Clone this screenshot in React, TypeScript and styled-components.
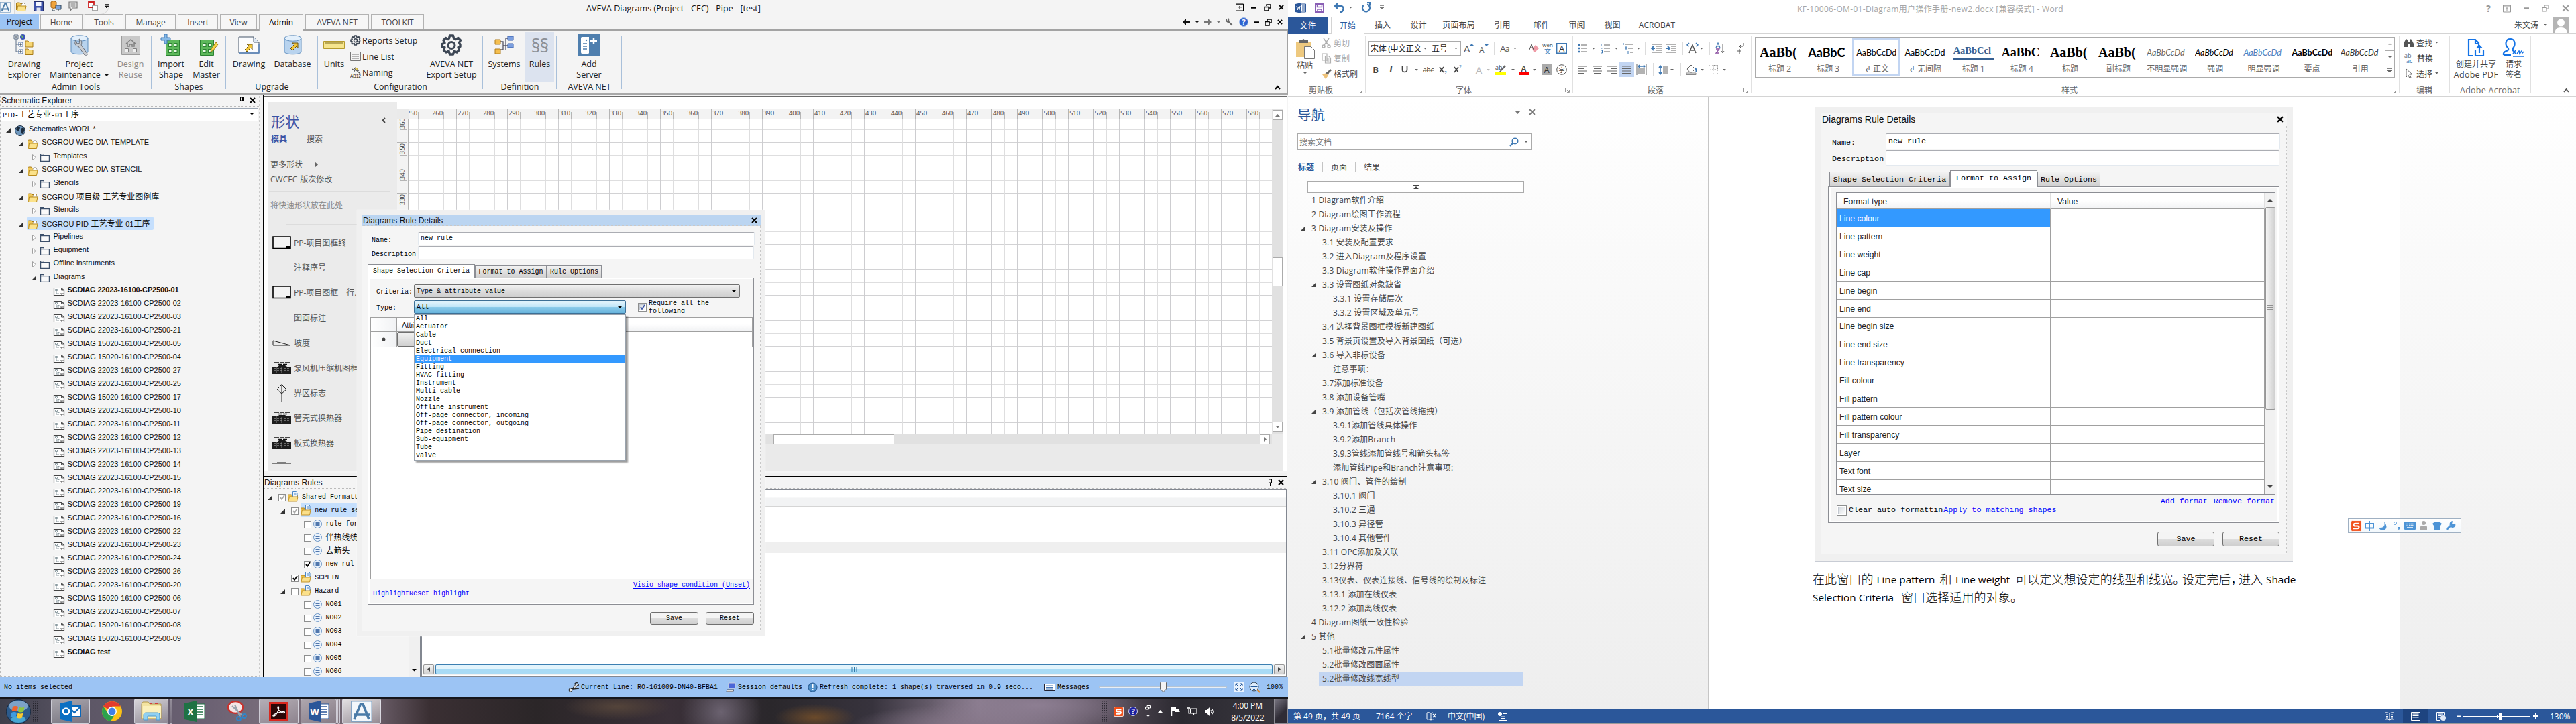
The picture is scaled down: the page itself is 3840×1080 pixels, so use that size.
import React from "react";
import styled, { createGlobalStyle, css } from "styled-components";

const UI = `"Open Sans", "Noto Sans CJK SC", sans-serif`;
const ARIAL = `"Liberation Sans", "Noto Sans CJK SC", sans-serif`;
const MONO = `"Liberation Mono", "Noto Sans CJK SC", monospace`;

const Global = createGlobalStyle`
  * { box-sizing: border-box; }
  html, body { margin: 0; padding: 0; background: #fff; overflow: hidden; }
  body { font-family: ${UI}; font-size: 12px; color: #222; }
  svg { display: block; flex: none; overflow: visible; }
`;

const Desktop = styled.div`
  display: flex; width: 3840px; height: 1080px; overflow: hidden; position: relative;
`;

/* ---------- text helpers ---------- */
const CjkRun = styled.span<{ $s: number }>`font-size: ${p => p.$s}px; letter-spacing: 0;`;
const Mixed = ({ text, cjk = 12 }: { text: string; cjk?: number }) => (
  <>
    {text.split(/([\u3000-\u9fff\uff00-\uffef]+)/).map((s, i) =>
      i % 2 ? <CjkRun key={i} $s={cjk}>{s}</CjkRun> : s
    )}
  </>
);
const Mono = styled.span<{ $s?: number; $c?: string; $u?: boolean }>`
  font-family: ${MONO}; font-size: ${p => p.$s || 10}px; white-space: pre; color: ${p => p.$c || "#000"};
  ${p => p.$u && css`text-decoration: underline; text-underline-offset: 2px;`}
`;

/* ---------- small glyphs ---------- */
const Svg = ({ w = 16, h = w, vb, children }: { w?: number; h?: number; vb?: string; children: React.ReactNode }) => (
  <svg width={w} height={h} viewBox={vb || `0 0 ${w} ${h}`} fill="none">{children}</svg>
);
const Down = ({ c = "#666", w = 6 }: { c?: string; w?: number }) => (
  <Svg w={w} h={w / 2} vb="0 0 6 3"><path d="M0 0h6l-3 3z" fill={c} /></Svg>
);
const Cross = ({ s = 9, c = "#000", t = 2 }) => (
  <Svg w={s} vb="0 0 9 9"><path d="M1 1l7 7M8 1l-7 7" stroke={c} strokeWidth={t} /></Svg>
);
const Pin = () => <Svg w={9} h={11}><path d="M2.5 1h4v5h-4zM5.5 1v5M.5 6.5h8M4.5 6.5V11" stroke="#000" /></Svg>;
const Restore = ({ c = "#000", t = 1.5 }) => (
  <Svg w={11}><path d="M4 3V1h6v5H7.500M1 4.500h6V10H1z" stroke={c} strokeWidth={t} /></Svg>
);
const Minus = ({ c = "#000" }) => <Svg w={8} h={3}><path d="M0 1.500h8" stroke={c} strokeWidth="2.500" /></Svg>;
const BoxUp = ({ c = "#000" }) => (
  <Svg w={12}><path d="M.5 1h11v10H.5zM.5 2h11M6 9V4.500M4 6.500L6 4.500l2 2" stroke={c} /></Svg>
);
const Gear = ({ s = 32 }) => (
  <Svg w={s} vb="0 0 32 32">
    <path d="M13.500 2h5l1 4 3 1.500 3.500-2 3.500 3.500-2 3.500L29 15.500v3l-3 1 1.500 4-3.500 3.500-4-2-1.500 5h-5l-1.500-5-4 2L4.500 24 6 19.500l-4-1v-4l4-1.500-2-4L7.500 5.500 11 7.500l1.500-1.500z" stroke="#3c4654" strokeWidth="3.400" strokeLinejoin="round" />
    <circle cx="16" cy="16.500" r="5" stroke="#3c4654" strokeWidth="3" />
  </Svg>
);
const OpenFolder = ({ s = 16 }) => (
  <Svg w={s} h={s * 14 / 16} vb="0 0 16 14">
    <path d="M.5 12V2l1-1h4l1 1.500h7V6" fill="#eec75a" stroke="#a87b16" />
    <path d="M8 4l3-3 3 3v4H8z" fill="#fff" stroke="#9a9a9a" strokeWidth=".7" />
    <path d="M2.500 6H15l-1.500 7.500H1.500z" fill="#fbe28b" stroke="#b88a1c" />
  </Svg>
);
const DocFolder = () => (
  <Svg w={16}>
    <path d="M.5 14.500V5h5l1 1.500h8V10" fill="#e9bd45" stroke="#b3821a" />
    <path d="M7.500.5h5l1.500 1.500v7h-6.500z" fill="#eef5fd" stroke="#4b86c6" /><path d="M9 3h3.500M9 5h3.500" stroke="#4b86c6" />
    <path d="M2.500 8H15l-1.500 7H.8z" fill="#fbe08a" stroke="#c2932a" />
  </Svg>
);
const BlankFolder = () => <Svg w={14} h={12}><path d="M.6 11.400V.6h4.800v2h8v8.800zM.6 2.600h6" stroke="#3c506b" strokeWidth="1.200" fill="#fafafa" /></Svg>;
const DiagramDoc = () => (
  <Svg w={16} h={12}><path d="M.5.5h11L15.500 4v7.500H.5z" fill="#fff" stroke="#444" strokeWidth="1.200" /><path d="M11.500.5V4h4M9 9h3v2.500M12 9h3" stroke="#555" />
    <path d="M2.500 2.500h3v2h-3zM4 5v4h4M5.500 6.500h3" stroke="#8b9aa0" /></Svg>
);
const Globe = () => (
  <Svg w={16}><circle cx="8" cy="8" r="7.500" fill="#6f97bd" stroke="#223448" /><path d="M3 3c3-2 5-1 5 1L6 8 4 9 2 6zM9 5l4-2 2 4-3 6-2-1-1-4z" fill="#1b2b3c" /></Svg>
);
const Equal = () => (
  <Svg w={13}><circle cx="6.500" cy="6.500" r="6" fill="#e9f2fc" stroke="#6a95c6" /><path d="M3.500 5h6M3.500 8h6" stroke="#1e4f92" strokeWidth="1.500" /></Svg>
);
const TwistOpen = () => <Svg w={7}><path d="M7 0v7H0z" fill="#333" /></Svg>;
const TwistShut = () => <Svg w={6} h={9}><path d="M.5.5L5.300 4.500.5 8.500z" fill="#fff" stroke="#a0a0a0" /></Svg>;

/* ---------- AVEVA shell ---------- */
const Aveva = styled.div`
  width: 1920px; height: 1080px; display: flex; flex-direction: column; background: #f4f4f4; flex: none;
`;
const QuickBar = styled.div`height: 22px; display: flex; align-items: center; flex: none;`;
const QuickPill = styled.div`
  display: flex; align-items: center; width: 142px; height: 22px; margin-left: 5px; padding: 0 0 2px 2px; gap: 10px;
  background: #f0f0f0; border: 1px solid #dadada; border-top: 0; border-radius: 0 0 14px 0;
`;
const AppTitle = styled.div`margin: 2px 0 0 711px; width: 300px; white-space: nowrap; font-size: 12.500px; letter-spacing: 0.050px; color: #111;`;
const WindowKeys = styled.div<{ $gap: number; $r: number }>`
  margin-left: auto; display: flex; align-items: center; gap: ${p => p.$gap}px; padding-right: ${p => p.$r}px;
`;
const TabBar = styled.div`height: 24px; display: flex; border-bottom: 2px solid #a3a3a3; flex: none; align-items: flex-end;`;
const AppTab = styled.div<{ $w: number; $kind?: "file" | "on" }>`
  width: ${p => p.$w}px; height: 23px; margin-right: 3px; font-size: 12px; letter-spacing: -0.1px; color: #444; flex: none;
  display: flex; align-items: center; justify-content: center; border: 1px solid #b2b2b2; border-bottom: 0; background: #f6f6f6;
  ${p => p.$kind === "file" && css`background: #9cc4f4; border: 0; color: #111; margin-right: 2px;`}
  ${p => p.$kind === "on" && css`margin-bottom: -2px; height: 25px; background: #f4f4f4; color: #000; padding-bottom: 2px;`}
`;
const Ribbon = styled.div`height: 95px; display: flex; border-bottom: 2px solid #a8a8a8; border-right: 1px solid #a3a3a3; flex: none;`;
const RibbonGroup = styled.div<{ $w: number }>`
  width: ${p => p.$w}px; display: flex; flex-direction: column; flex: none;
  background: linear-gradient(#a9c0da, #a9c0da) right 7px / 1px 80px no-repeat;
`;
const GroupBody = styled.div`height: 76px; display: flex; padding-top: 2px;`;
const GroupName = styled.div`height: 16px; line-height: 16px; text-align: center; font-size: 12.500px; letter-spacing: 0;`;
const BigButton = styled.div<{ $w: number; $on?: boolean; $dim?: boolean }>`
  width: ${p => p.$w}px; height: 74px; padding-top: 3px; display: flex; flex-direction: column; align-items: center; flex: none;
  line-height: 16px; font-size: 12.500px; text-align: center; white-space: nowrap; letter-spacing: 0;
  background: ${p => (p.$on ? "#dce3ef" : "none")}; color: ${p => (p.$dim ? "#8c8c8c" : "#222")};
`;
const IconBox = styled.div`height: 32px; display: flex; align-items: center; justify-content: center; margin-bottom: 5px;`;
const SmallColumn = styled.div`width: 106px; display: flex; flex-direction: column;`;
const SmallButton = styled.div`height: 24px; display: flex; align-items: center; gap: 2px; font-size: 12.500px; white-space: nowrap;`;
const Inline = styled.span`display: inline-flex; align-items: center; gap: 6px;`;
const CollapseMark = styled.div`margin: auto 10px 5px auto;`;

const Big = ({ w, icon, l1, l2, on, dim, arrow }: any) => (
  <BigButton $w={w} $on={on} $dim={dim}>
    <IconBox>{icon}</IconBox>
    <div>{l1}</div>
    {l2 && <div>{arrow ? <Inline>{l2}<Down c="#111" /></Inline> : l2}</div>}
  </BigButton>
);

const AvevaA = ({ s = 16 }) => (
  <Svg w={s} vb="0 0 32 32"><rect x=".8" y=".8" width="30.400" height="30.400" fill="#f3f7fb" stroke="#7ea1c4" strokeWidth="1.400" />
    <path d="M5 28L14.500 5h3.500l9 23M4 21h24" stroke="#4a7ba8" strokeWidth="3.600" /></Svg>
);
const Floppy = ({ c = "#3c50a8", w = 15 }) => (
  <Svg w={w} vb="0 0 15 15"><path d="M.5.5h14v14h-12l-2-2z" fill={c} stroke="#222c66" /><path d="M3.500 1h8v6h-8z" fill="#f4f6ff" /><path d="M4.500 9.500h6V14h-6z" fill="#dfe3ee" /></Svg>
);
const ShapeCard = ({ plus, gray }: any) => (
  <Svg w={32}>
    <path d={plus ? "M8.500 8.500h20v23h-20z" : "M6.500 8.500h20v23h-20z"} fill={gray ? "#bdbdbd" : "#5db85a"} stroke={gray ? "#8c8c8c" : "#2c8233"} />
    {[0, 1, 2, 3].map(i => (
      <rect key={i} x={(plus ? 12.500 : 10.500) + (i % 2) * 8} y={13.500 + (i > 1 ? 9 : 0)} width="4.500" height="5" fill="#eefbea" stroke="#2c8233" />
    ))}
    {plus ? <path d="M6 0h4v5h5v4h-5v5H6V9H1V5h5z" fill="#86b9e6" stroke="#3f79b6" /> : <path d="M30 12l3 3-7 9-4 2 1-4z" fill="#f7d64a" stroke="#a8801c" />}
  </Svg>
);
const Cylinder = ({ w = 27, children }: any) => (
  <Svg w={w} h={30} vb="0 0 27 30"><path d="M1 5v20c0 5 25 5 25 0V5" fill="#b8d3ee" stroke="#5e8dbd" /><ellipse cx="13.500" cy="5" rx="12.500" ry="4.200" fill="#e3f0fc" stroke="#5e8dbd" />{children}</Svg>
);
const GoldArrow = <path d="M10 20l6-6-3-2h8v8l-2-3-6 6z" fill="#f0c53c" stroke="#6b5410" />;

const AvevaRibbon = () => (
  <Ribbon>
    <RibbonGroup $w={226}>
      <GroupBody>
        <Big w={72} l1="Drawing" l2="Explorer" icon={
          <Svg w={32}>
            <path d="M1 1h6v6H1zM4 7v19h6M4 15h6" stroke="#5c6f86" /><path d="M2.500 4h3" stroke="#234" />
            <circle cx="14" cy="4" r="4" fill="#3b55b8" /><path d="M12 1l3 2-2 3z" fill="#6ec05a" />
            <path d="M8 12h6v6H8zM8 23h6v6H8z" fill="#fff" stroke="#4d6fa3" /><path d="M9 15h4M9 26h4M11 13v4M11 24v4" stroke="#234" />
            <path d="M18 10h4l1 1.500h6v7.500H18zM18 22h4l1 1.500h6v7H18z" fill="#f6d673" stroke="#a87b16" />
          </Svg>} />
        <Big w={92} l1="Project" l2="Maintenance" arrow icon={
          <Cylinder><path d="M8 8c-3 5 0 9 4 9l9 13c2 2 5 0 4-2l-9-13c2-4 0-8-3-9l1 6-4 1z" fill="#c9ccd1" stroke="#6a6f78" /></Cylinder>} />
        <Big w={61} dim l1="Design" l2="Reuse" icon={
          <Svg w={32}><path d="M2.500 2.500h27v28h-27z" fill="#c9c9c9" stroke="#9c9c9c" /><path d="M9 14l7-6 7 6M11 13v5h3v-3h4v3h3v-5" stroke="#808080" strokeWidth="1.500" /><path d="M7.500 21.500h5v5h-5zM19.500 21.500h5v5h-5z" stroke="#808080" fill="#f0f0f0" /></Svg>} />
      </GroupBody>
      <GroupName>Admin Tools</GroupName>
    </RibbonGroup>
    <RibbonGroup $w={111}>
      <GroupBody><Big w={58} l1="Import" l2="Shape" icon={<ShapeCard plus />} /><Big w={47} l1="Edit" l2="Master" icon={<ShapeCard />} /></GroupBody>
      <GroupName>Shapes</GroupName>
    </RibbonGroup>
    <RibbonGroup $w={137}>
      <GroupBody>
        <Big w={68} l1="Drawing" icon={<Svg w={32} h={26}><path d="M1 1h22l8 8v16H1z" fill="#fbfcfe" stroke="#46566b" /><path d="M1 25h30V12" stroke="#5b87bd" strokeWidth="1.500" /><path d="M23 1v8h8" fill="#dce6f2" stroke="#46566b" />{GoldArrow}</Svg>} />
        <Big w={62} l1="Database" icon={<Cylinder>{GoldArrow}</Cylinder>} />
      </GroupBody>
      <GroupName>Upgrade</GroupName>
    </RibbonGroup>
    <RibbonGroup $w={246}>
      <GroupBody>
        <Big w={48} l1="Units" icon={<Svg w={32} h={12}><path d="M.5.5h31v11H.5z" fill="#f6e58d" stroke="#b59b2e" /><path d="M4 1v4M7 1v3M10 1v4M13 1v3M16 1v4M19 1v3M22 1v4M25 1v3M28 1v4" stroke="#7d6a1a" /></Svg>} />
        <SmallColumn>
          <SmallButton><Gear s={16} />Reports Setup</SmallButton>
          <SmallButton><Svg w={16} h={14}><path d="M.5.5h15v13H.5zM3 4h10M3 7h10M3 10h10" stroke="#777" /></Svg>Line List</SmallButton>
          <SmallButton><Svg w={16}><path d="M6 2l9 8M8 0l1 3M12 1l-2 3M3 3l3 2M13 5l-3 1M5 8l2-3" stroke="#555" strokeWidth="1.300" /><path d="M7 3l3-2 1 3" fill="#f5d33d" /><text x="0" y="16" fontSize="6.500" fontFamily="Liberation Sans" fill="#222">AB12</text></Svg>Naming</SmallButton>
        </SmallColumn>
        <Big w={90} l1="AVEVA NET" l2="Export Setup" icon={<Gear />} />
      </GroupBody>
      <GroupName>Configuration</GroupName>
    </RibbonGroup>
    <RibbonGroup $w={110}>
      <GroupBody>
        <Big w={63} l1="Systems" icon={<Svg w={30} h={28}><path d="M9 10h4v12H9M13 16h8M17 5v18M17 5h4" stroke="#556" strokeWidth="1.300" transform="translate(0,-1)" /><path d="M1 6h8v7H1zM1 20h8v7H1z" fill="#f5bf4f" stroke="#b07c1a" /><path d="M20 1h8v6h-8zM20 12h8v6h-8z" fill="#7b9fe0" stroke="#2f56a8" /></Svg>} />
        <Big w={43} on l1="Rules" icon={<Glyph $s={27} $c="#8b8f96">§§</Glyph>} />
      </GroupBody>
      <GroupName>Definition</GroupName>
    </RibbonGroup>
    <RibbonGroup $w={97}>
      <GroupBody>
        <Big w={96} l1="Add" l2="Server" icon={<Svg w={32}><path d="M0 0h32v32H0z" fill="#4f7fae" /><path d="M4 6q0-2 2-2h10v24q0 1-2 1H6q-2 0-2-2z" fill="#fff" /><path d="M7 14h6M7 18h6M7 22h6" stroke="#4f7fae" strokeWidth="1.500" /><circle cx="12" cy="9" r="1.200" fill="#4f7fae" /><path d="M23 5v10M18 10h10" stroke="#fff" strokeWidth="2.500" /></Svg>} />
      </GroupBody>
      <GroupName>AVEVA NET</GroupName>
    </RibbonGroup>
    <CollapseMark><Svg w={9} h={7}><path d="M1 6l3.500-4L8 6" stroke="#000" strokeWidth="2" /></Svg></CollapseMark>
  </Ribbon>
);
const Glyph = styled.span<{ $s: number; $c?: string; $b?: boolean; $i?: boolean; $f?: string }>`
  font-size: ${p => p.$s}px; line-height: 1; color: ${p => p.$c || "#444"}; font-weight: ${p => (p.$b ? 700 : 400)};
  font-style: ${p => (p.$i ? "italic" : "normal")}; font-family: ${p => p.$f || UI}; letter-spacing: -1px;
`;

/* ---------- explorer ---------- */
const Body = styled.div`height: 869px; display: flex; flex: none;`;
const Explorer = styled.div`width: 387px; border-left: 1px dotted #bbb; border-right: 1px dotted #ccc; border-bottom: 1px dotted #bbb; flex: none;`;
const PaneTitle = styled.div<{ $h: number; $r: number }>`
  height: ${p => p.$h}px; display: flex; align-items: center; font-family: ${ARIAL}; font-size: 12.200px; color: #111;
  border-bottom: 1px dotted #bbb; padding: 0 ${p => p.$r}px 0 1px; gap: 7px;
`;
const Grow = styled.span`flex: 1;`;
const Combo = styled.div`
  height: 20px; margin: 2px 1px 2px 0; background: #fff; border: 1px solid #d5dfe9; border-top-color: #9aa5b3; border-radius: 1px;
  display: flex; align-items: center; justify-content: space-between; padding: 0 5px 2px 2px;
`;
const TreeRow = styled.div<{ $d: number }>`height: 20px; display: flex; align-items: center; padding-left: ${p => 2 + p.$d * 19.200}px;`;
const Twist = styled.div`width: 19px; display: flex; justify-content: center; flex: none; padding-top: 3px;`;
const TreeLabel = styled.div<{ $b?: boolean; $on?: boolean }>`
  height: 20px; display: flex; align-items: center; gap: 5px; font-family: ${ARIAL}; font-size: 11px; color: #111; white-space: nowrap;
  ${p => p.$b && css`font-weight: 700; letter-spacing: -0.15px;`}
  ${p => p.$on && css`background: #c5dffd; border-radius: 2px; margin-left: -1px; padding: 0 6px 0 1px;`}
`;
const TreeText = styled.span`padding-bottom: 2px;`;
const TreeIcon = styled.span`padding-top: 3px; display: flex;`;
const treeNodes: [number, string, string, string?][] = [
  [0, "globe", "Schematics WORL *", "open"],
  [1, "yellow", "SCGROU WEC-DIA-TEMPLATE", "open"],
  [2, "blank", "Templates", "shut"],
  [1, "yellow", "SCGROU WEC-DIA-STENCIL", "open"],
  [2, "blank", "Stencils", "shut"],
  [1, "yellow", "SCGROU 项目级-工艺专业图例库", "open"],
  [2, "blank", "Stencils", "shut"],
  [1, "yellow", "SCGROU PID-工艺专业-01工序", "open"],
  [2, "blank", "Pipelines", "shut"],
  [2, "blank", "Equipment", "shut"],
  [2, "blank", "Offline instruments", "shut"],
  [2, "blank", "Diagrams", "open"],
  ...["22023-16100-CP2500-01", "22023-16100-CP2500-02", "22023-16100-CP2500-03", "22023-16100-CP2500-21", "15020-16100-CP2500-05",
    "15020-16100-CP2500-04", "22023-16100-CP2500-27", "22023-16100-CP2500-25", "15020-16100-CP2500-17", "22023-16100-CP2500-10",
    "22023-16100-CP2500-11", "22023-16100-CP2500-12", "22023-16100-CP2500-13", "22023-16100-CP2500-14", "22023-16100-CP2500-15",
    "22023-16100-CP2500-18", "22023-16100-CP2500-19", "22023-16100-CP2500-16", "22023-16100-CP2500-22", "22023-16100-CP2500-23",
    "22023-16100-CP2500-24", "22023-16100-CP2500-26", "22023-16100-CP2500-20", "15020-16100-CP2500-06", "22023-16100-CP2500-07",
    "15020-16100-CP2500-08", "15020-16100-CP2500-09", "test"].map(s => [3, "diag", "SCDIAG " + s] as [number, string, string]),
];
const treeIcons: any = { globe: <Globe />, yellow: <OpenFolder />, blank: <BlankFolder />, diag: <DiagramDoc /> };

const ExplorerPane = () => (
  <Explorer>
    <PaneTitle $h={18} $r={5}>Schematic Explorer<Grow /><Pin /><Cross /></PaneTitle>
    <Combo><Mono $s={10}><Mixed text="PID-工艺专业-01工序" /></Mono><Down c="#000" w={7} /></Combo>
    {treeNodes.map(([d, ic, t, st], i) => (
      <TreeRow key={i} $d={d}>
        <Twist>{st === "open" ? <TwistOpen /> : st === "shut" ? <TwistShut /> : null}</Twist>
        <TreeLabel $b={i === 12 || i === treeNodes.length - 1} $on={i === 7}><TreeIcon>{treeIcons[ic]}</TreeIcon><TreeText><Mixed text={t} /></TreeText></TreeLabel>
      </TreeRow>
    ))}
  </Explorer>
);
const VSplit = styled.div`width: 6px; border-left: 1.500px solid #000; border-right: 1.500px solid #000; background: #f0f0f0; flex: none;`;
const RightSide = styled.div`width: 1526px; display: flex; flex-direction: column; flex: none;`;

/* ---------- Visio drawing ---------- */
const VisioFrame = styled.div`
  height: 560px; margin-top: 2px; background: #fff; border-top: 1px solid #6b6b6b; border-left: 1px solid #8a8a8a; display: flex; padding: 8px 6px 0; flex: none;
`;
const Shapes = styled.div`width: 192px; background: #ebebeb; height: 550px; padding: 0 0 0 4px; overflow: hidden; flex: none; color: #555;`;
const ShapesHead = styled.div`display: flex; justify-content: space-between; padding: 11px 17px 0 0; height: 44px; align-items: center; font-size: 21px; color: #3b53a4;`;
const ShapesTabs = styled.div`display: flex; height: 22px; align-items: center; color: #555; b { color: #3b53a4; }`;
const ThinBar = styled.i<{ $m: number }>`width: 1px; height: 15px; background: #c4c4c4; margin: 0 ${p => p.$m}px;`;
const ShapesLine = styled.div<{ $t: number; $h: number; $c?: string }>`
  display: flex; align-items: center; gap: 18px; height: ${p => p.$h}px; margin-top: ${p => p.$t}px; white-space: nowrap; margin-left: -1px; color: ${p => p.$c || "#555"};
`;
const Rule = styled.div<{ $l: number; $t: number; $b?: number }>`height: 1px; background: #dcdcdc; margin: ${p => p.$t}px 11px ${p => p.$b || 0}px ${p => p.$l}px;`;
const ShapeItem = styled.div`height: 37.400px; display: flex; align-items: center; padding-left: 2px; white-space: nowrap;`;
const ShapeIcon = styled.div`width: 32px; flex: none;`;
const FrameIcon = <Svg w={28} h={20}><path d="M1 1h26v17.500H1z" fill="#f3f3f3" stroke="#000" strokeWidth="1.600" /><path d="M20 15h7v4h-7z" fill="#000" /></Svg>;
const TableIcon = <Svg w={28} h={18}><path d="M3 1h23M8 3.500h14" stroke="#111" strokeWidth="1.300" strokeDasharray="7 1" /><path d="M10 5h9l3 2h6v11H0V7h8z" fill="#1d1d1d" /><path d="M2 10h24M2 13h24" stroke="#ccc" strokeWidth=".9" strokeDasharray="3 2" /><path d="M6 7v10M14 8v9" stroke="#999" strokeWidth=".8" /></Svg>;
const shapeItems: [any, string][] = [
  [FrameIcon, "PP-项目图框终"], [null, "注释序号"], [FrameIcon, "PP-项目图框一行."], [null, "图面标注"],
  [<Svg w={28} h={9}><path d="M1 8V1l26 7z" stroke="#222" /></Svg>, "坡度"],
  [TableIcon, "泵风机压缩机图框"],
  [<Svg w={28} h={26}><path d="M14 0v26M14 1l7 7-7 6-7-6z" stroke="#222" /></Svg>, "界区标志"],
  [TableIcon, "管壳式换热器"], [TableIcon, "板式换热器"],
];
const Drawing = styled.div`width: 1320px; margin-top: 10px; height: 540px; background: #eaeaea; display: flex; flex-direction: column; flex: none;`;
const DrawingTop = styled.div`display: flex; height: 485px;`;
const Sheet = styled.div`width: 1304px; display: flex; flex-direction: column;`;
const HRuler = styled.div`height: 16px; margin-left: 17px; display: flex; overflow: hidden; background: #f3f3f3; border-bottom: 1px solid #b5b5b5;`;
const HCell = styled.div`
  width: 38px; flex: none; border-left: 1px solid #b5b5b5; font-size: 9.500px; line-height: 14px; padding-left: 1px; color: #444; letter-spacing: -0.1px;
  background: linear-gradient(#b5b5b5, #b5b5b5) 18px 5px / 1px 11px no-repeat;
  &:first-child { margin-left: -5px; }
`;
const SheetRow = styled.div`display: flex; height: 469px;`;
const VRuler = styled.div`width: 17px; background: #f3f3f3; border-right: 1px solid #b5b5b5; overflow: hidden;`;
const VCell = styled.div`
  height: 38px; border-top: 1px solid #b5b5b5; font-size: 9.500px; color: #444; writing-mode: vertical-rl; line-height: 15px;
  background: linear-gradient(#b5b5b5, #b5b5b5) 5px 18px / 12px 1px no-repeat;
  span { transform: rotate(180deg); display: inline-block; padding-bottom: 1px; }
  &:first-child { margin-top: -4px; }
`;
const GridArea = styled.div`
  width: 1287px; background-color: #fff;
  background-image: linear-gradient(90deg, #cdcdd0 1px, transparent 1px), linear-gradient(90deg, #dededf 1px, transparent 1px),
    linear-gradient(#d2d2d4 1px, transparent 1px), linear-gradient(#dededf 1px, transparent 1px);
  background-size: 38px 38px; background-position: 33px 0, 14px 0, 0 34px, 0 15px;
`;
const VScroll = styled.div`width: 16px; background: #e1e1e1; display: flex; flex-direction: column; align-items: center; padding: 2px 0;`;
const FlatBox = styled.div<{ $w: number; $h: number; $mt?: number; $ml?: number }>`
  width: ${p => p.$w}px; height: ${p => p.$h}px; margin-top: ${p => p.$mt || 0}px; margin-left: ${p => p.$ml || 0}px;
  border: 1px solid #ababab; background: #fff; display: flex; align-items: center; justify-content: center; flex: none;
`;
const HScroll = styled.div`height: 16px; width: 1304px; background: #e1e1e1; display: flex; align-items: center;`;

const DrawingPane = () => (
  <VisioFrame>
    <Shapes>
      <ShapesHead><span>形状</span><Svg w={6} h={9}><path d="M5 1L1.500 4.500 5 8" stroke="#444" strokeWidth="1.800" /></Svg></ShapesHead>
      <ShapesTabs><b>模具</b><ThinBar $m={14} />搜索</ShapesTabs>
      <ShapesLine $t={15} $h={24}>更多形状<Svg w={5} h={9}><path d="M0 0l5 4.500L0 9z" fill="#666" /></Svg></ShapesLine>
      <ShapesLine $t={-1} $h={22}>CWCEC-版次修改</ShapesLine>
      <Rule $l={-3} $t={7} />
      <ShapesLine $t={10} $h={20} $c="#888">将快速形状放在此处</ShapesLine>
      <Rule $l={23} $t={18} $b={8} />
      {shapeItems.map(([ic, t], i) => <ShapeItem key={i}><ShapeIcon>{ic}</ShapeIcon>{t}</ShapeItem>)}
      <ShapeItem><ShapeIcon>{<Svg w={28} h={20}><path d="M0 3h28M7 2h14" stroke="#111" /></Svg>}</ShapeIcon></ShapeItem>
    </Shapes>
    <Drawing>
      <DrawingTop>
        <Sheet>
          <HRuler>{Array.from({ length: 34 }, (_, i) => <HCell key={i}>{250 + i * 10}</HCell>)}</HRuler>
          <SheetRow>
            <VRuler>{Array.from({ length: 12 }, (_, i) => <VCell key={i}><span>{360 - i * 10}</span></VCell>)}</VRuler>
            <GridArea />
          </SheetRow>
        </Sheet>
        <VScroll>
          <FlatBox $w={15} $h={15}><Svg w={7} h={4}><path d="M0 4h7L3.500 0z" fill="#777" /></Svg></FlatBox>
          <FlatBox $w={15} $h={43} $mt={205} />
          <FlatBox $w={15} $h={15} $mt={202}><Down c="#777" w={7} /></FlatBox>
        </VScroll>
      </DrawingTop>
      <HScroll><FlatBox $w={180} $h={15} $ml={561} /><FlatBox $w={15} $h={15} $ml={545}><Svg w={4} h={7}><path d="M0 0l4 3.500L0 7z" fill="#777" /></Svg></FlatBox></HScroll>
    </Drawing>
  </VisioFrame>
);

/* ---------- rules pane ---------- */
const HSplit = styled.div`height: 6px; border-top: 1.500px solid #000; border-bottom: 1.500px solid #000; background: #f0f0f0; margin-top: 2px; flex: none;`;
const RulesBody = styled.div`display: flex; height: 281px;`;
const RulesTree = styled.div`width: 216px; height: 281px; overflow: hidden; padding-top: 2px;`;
const CheckBox = styled.span`
  width: 11px; height: 11px; border: 1px solid #8e8f8f; background: #fff; display: flex; align-items: center; justify-content: center; flex: none; margin: 2px 3px 0 3px;
`;
const Tick = ({ c }: { c: string }) => <Svg w={8} h={8}><path d="M1 4l2 3 4-6" stroke={c} strokeWidth="1.800" /></Svg>;
const RuleRow = styled.div<{ $d: number }>`height: 20px; display: flex; align-items: center; padding-left: ${p => p.$d * 19.200}px;`;
const RuleLabel = styled.div<{ $on?: boolean }>`height: 20px; flex: 1; display: flex; align-items: center; gap: 5px; background: ${p => (p.$on ? "#c5dffd" : "none")}; overflow: hidden;`;
const RulesScroll = styled.div`width: 17px; background: #f0f0f0; display: flex; flex-direction: column; justify-content: flex-end; align-items: center; padding-bottom: 9px;`;
const RulesList = styled.div`
  width: 1292px; margin-top: 1px; border: 1px solid #828790; height: 280px; background: #fff; display: flex; flex-direction: column; border-left: 3px double #828790;
`;
const ListHead = styled.div`height: 25px; background: linear-gradient(#fff 45%, #f2f3f4 50%); border-bottom: 1px solid #d5d5d5;`;
const ListStripe = styled.div`height: 17px; margin-top: 52px; background: #efefef;`;
const AeroScroll = styled.div`height: 17px; margin: auto 2px 2px 2px; background: #f0f0f0; display: flex; gap: 2px; align-items: center;`;
const AeroBtn = styled.div`width: 16px; height: 15px; border: 1px solid #979797; border-radius: 2px; background: linear-gradient(#f5f5f5, #d0d0d0); display: flex; align-items: center; justify-content: center; flex: none;`;
const AeroThumb = styled.div`
  flex: 1; height: 15px; border: 1px solid #3c7fb1; border-radius: 2px; background: linear-gradient(#e3f4fc 0 45%, #a9dbf5 50% 100%);
  display: flex; align-items: center; justify-content: center;
`;
const rules: [number, boolean, string, string, string][] = [
  [0, true, "dim", "folder", "Shared Formatt"], [1, true, "dim", "folder", "new rule se"], [2, false, "", "eq", "rule for"], [2, false, "", "eq", "伴热线统"],
  [2, false, "", "eq", "去箭头"], [2, false, "on", "eq", "new rul"], [1, false, "on", "folder", "SCPLIN"], [1, true, "", "folder", "Hazard"],
  ...["NO01", "NO02", "NO03", "NO04", "NO05", "NO06"].map(s => [2, false, "", "eq", s] as [number, boolean, string, string, string]),
];
const RulesPane = () => (
  <>
    <PaneTitle $h={18} $r={5}>Diagrams Rules<Grow /><Pin /><Cross /></PaneTitle>
    <RulesBody>
      <RulesTree>
        {rules.map(([d, open, ck, ic, t], i) => (
          <RuleRow key={i} $d={d}>
            <Twist>{open && <TwistOpen />}</Twist>
            <CheckBox>{ck && <Tick c={ck === "on" ? "#000" : "#aaa"} />}</CheckBox>
            <RuleLabel $on={i === 1}>{ic === "eq" ? <Equal /> : <DocFolder />}<Mono><Mixed text={t} /></Mono></RuleLabel>
          </RuleRow>
        ))}
      </RulesTree>
      <RulesScroll><Down c="#000" w={7} /></RulesScroll>
      <RulesList>
        <ListHead /><ListStripe />
        <AeroScroll>
          <AeroBtn><Svg w={4} h={7}><path d="M4 0L0 3.500 4 7z" fill="#444" /></Svg></AeroBtn>
          <AeroThumb><Svg w={9} h={7}><path d="M1 0v7M4.500 0v7M8 0v7" stroke="#2d78a8" /></Svg></AeroThumb>
          <AeroBtn><Svg w={4} h={7}><path d="M0 0l4 3.500L0 7z" fill="#444" /></Svg></AeroBtn>
        </AeroScroll>
      </RulesList>
    </RulesBody>
  </>
);

/* ---------- status and taskbar ---------- */
const StatusBar = styled.div`height: 30px; background: #9cc4f4; display: flex; align-items: center; padding-left: 6px; flex: none;`;
const StatusItem = styled.div<{ $w: number; $ml: number }>`width: ${p => p.$w}px; margin-left: ${p => p.$ml}px; display: flex; align-items: center; gap: 3px; flex: none; white-space: nowrap;`;
const SliderLine = styled.div`width: 190px; height: 3px; margin-left: 15px; background: #e8eef5; border: 1px solid #b5c4d4; display: flex; align-items: center; padding-left: 89px;`;
const SliderThumb = <Svg w={10} h={16}><path d="M.5 1.500l1-1h7l1 1V11L5 15.500.5 11z" fill="#f3f3f3" stroke="#666" /></Svg>;
const Taskbar = styled.div`
  height: 40px; display: flex; align-items: center; border-top: 2px solid #15161c; flex: none;
  background:
    radial-gradient(ellipse 160px 40px at 1545px 10px, #8d7e92 0, transparent 100%),
    radial-gradient(ellipse 180px 30px at 1450px 38px, #857688 0, transparent 100%),
    radial-gradient(ellipse 60px 20px at 1215px 28px, #6b4a2a 0, transparent 100%),
    radial-gradient(ellipse 80px 20px at 920px 12px, #54443a 0, transparent 100%),
    radial-gradient(ellipse 60px 60px at 1075px 20px, #6b6270 0, transparent 100%),
    linear-gradient(90deg, #3e3f4b 0, #5c5665 120px, #6a6072 300px, #7b6f7c 420px, #6c5f6a 560px, #3a2f33 640px, #2b2628 800px, #3a3038 1000px, #2a272b 1150px, #37333d 1300px, #8a7c8e 1460px, #5b515e 1640px, #2b2930 1760px, #3a3840 1920px);
`;
const TaskSlot = styled.div<{ $w: number; $ml?: number; $box?: number }>`
  width: ${p => p.$w}px; height: 38px; margin-left: ${p => p.$ml || 0}px; display: flex; align-items: center; justify-content: center; flex: none;
  ${p => p.$box && css`border: 1px solid rgba(225,225,235,.75); border-radius: 3px;
    background: linear-gradient(160deg, rgba(255,255,255,${p.$box}) , rgba(255,255,255,${p.$box * 0.35}));`}
`;
const Grip = () => <Svg w={9} h={32}>{[0, 3, 6].map(x => <path key={x} d={`M${x + 1} 0v32`} stroke="#1a1a20" strokeWidth="1.500" strokeDasharray="1.500 2" />)}</Svg>;
const Office = ({ c, l }: { c: string; l: string }) => (
  <Svg w={32}><path d="M15 5h16v22H15z" fill="#fff" stroke={c} /><path d="M18 9h10M18 13h10M18 17h10M18 21h10" stroke={c} strokeWidth="1.600" />
    <path d="M1 4l18-4v32L1 28z" fill={c} /><text x="10" y="21.500" textAnchor="middle" fontSize="14" fontWeight="700" fontFamily="Open Sans" fill="#fff">{l}</text></Svg>
);
const Clock = styled.div`width: 68px; margin-left: 10px; margin-top: 1px; color: #fff; font-size: 12px; line-height: 18px; text-align: center; letter-spacing: -0.1px;`;
const ShowDesktop = styled.div`width: 22px; height: 38px; margin-left: 6px; border: 1px solid #8d8b93; background: linear-gradient(135deg, #777480, #2f2c36 60%);`;
const SogouS = ({ s = 15 }) => (
  <Svg w={s} vb="0 0 15 15"><rect x=".5" y=".5" width="14" height="14" rx="1.500" fill="#f1511b" stroke="#fff" strokeWidth=".8" /><path d="M11.500 4.300H6Q3.800 4.500 4 6t2 1.500h3q2.200.2 2 1.700T9 10.800H3.500" stroke="#fff" strokeWidth="1.900" /></Svg>
);

const AvevaStatus = () => (
  <StatusBar>
    <StatusItem $w={120} $ml={0}><Mono>No items selected</Mono></StatusItem>
    <StatusItem $w={224} $ml={721}><Svg w={16}><path d="M2 14a3 3 0 015-3l5-6h4M7 11l9-1M9 4l3-3 2 1" stroke="#222" strokeWidth="1.300" /><circle cx="3.500" cy="12.500" r="2.500" fill="#eee" stroke="#222" /><path d="M7 9l5-6 3 1-6 7z" fill="#ddd" stroke="#333" /></Svg><Mono>Current Line: RO-161009-DN40-BFBA1</Mono></StatusItem>
    <StatusItem $w={115} $ml={12}><Svg w={14} h={15}><path d="M3 1h10v8H3z" fill="#4a66d8" stroke="#ccd" /><path d="M1 11h10l-1.500 3H0z" fill="#ddd" stroke="#445" /></Svg><Mono>Session defaults</Mono></StatusItem>
    <StatusItem $w={340} $ml={6}><Svg w={15}><circle cx="7.500" cy="7.500" r="6.500" fill="#4f8fc9" stroke="#2b5f96" strokeWidth="1.200" /><path d="M7.500 3v5.500M7.500 10v2" stroke="#fff" strokeWidth="2" /></Svg><Mono>Refresh complete: 1 shape(s) traversed in 0.9 seco...</Mono></StatusItem>
    <StatusItem $w={67} $ml={13}><Svg w={16} h={11}><path d="M.5.500h15v10H.5z" fill="#fff" stroke="#223" /><path d="M3 3h10M3 5.500h10M3 8h10" stroke="#4474b0" /></Svg><Mono>Messages</Mono></StatusItem>
    <SliderLine>{SliderThumb}</SliderLine>
    <StatusItem $w={16} $ml={10}><Svg w={16}><rect x=".5" y=".5" width="15" height="15" fill="#eaf3fd" stroke="#335" /><path d="M3 3l3 3M13 3l-3 3M3 13l3-3M13 13l-3-3M3 6V3h3M10 3h3v3M3 10v3h3M10 13h3v-3" stroke="#24599c" /></Svg></StatusItem>
    <StatusItem $w={16} $ml={7}><Svg w={16}><circle cx="7.500" cy="7.500" r="6.500" fill="#dcebfb" stroke="#345" /><path d="M7.500 2.500v10M2.500 7.500h10M6 4l1.500-1.500L9 4M6 11l1.500 1.500L9 11" stroke="#24599c" /><path d="M12 12l4 4" stroke="#e08a2c" strokeWidth="2" /></Svg></StatusItem>
    <StatusItem $w={26} $ml={10}><Mono>100%</Mono></StatusItem>
  </StatusBar>
);
const TaskbarView = () => (
  <Taskbar>
    <TaskSlot $w={38} $ml={8}>
      <Svg w={37}><circle cx="18.500" cy="18.500" r="18" fill="#2c5b8c" stroke="#16293f" /><ellipse cx="18.500" cy="10" rx="14" ry="8" fill="#a8cbe8" opacity=".65" /><ellipse cx="18.500" cy="30" rx="11" ry="5" fill="#52c6ef" opacity=".7" />
        <path d="M10 11q4-2 8 0l-1.500 7q-4-2-8 0z" fill="#f0642c" /><path d="M19.500 11.500q4 2 8 0l-1.500 7q-4 2-8 0z" fill="#8ec63f" /><path d="M8 20q4-2 8 0l-1.500 7q-4-2-8 0z" fill="#3f9be0" /><path d="M17.500 20.500q4 2 8 0l-1.500 7q-4 2-8 0z" fill="#fbc92f" /></Svg>
    </TaskSlot>
    <TaskSlot $w={9} $ml={3}><Grip /></TaskSlot>
    <TaskSlot $w={58} $ml={18} $box={0.5}><Svg w={32}><path d="M14 8h17v16H14z" fill="#fff" stroke="#0a66b8" strokeWidth="2" /><path d="M18 14l4 4 8-8" stroke="#0a66b8" strokeWidth="2" /><path d="M1 4l18-4v32L1 28z" fill="#0a6fc2" /><circle cx="9.500" cy="16" r="4.500" stroke="#fff" strokeWidth="2.600" /></Svg></TaskSlot>
    <TaskSlot $w={66}><Svg w={30}><circle cx="15" cy="15" r="15" fill="#fbc116" /><path d="M15 15L2 7.500A15 15 0 0128 7.500H15z" fill="#e33b2e" /><path d="M2 7.500A15 15 0 0013 29.900L20 18 15 21 9 18z" fill="#2ba24c" /><circle cx="15" cy="15" r="7" fill="#fff" /><circle cx="15" cy="15" r="5.500" fill="#3f7fe8" /></Svg></TaskSlot>
    <TaskSlot $w={51} $box={0.75}><Svg w={32}><path d="M1 5l2-3h8l2 3h17v22H1z" fill="#f3e3a0" stroke="#b59a4a" /><path d="M3 8h27v18H3z" fill="#fbf0bb" /><path d="M13 4h4M21 4h5" stroke="#d33b3b" strokeWidth="2" /><path d="M4 29v-8q0-3 3-3h18q3 0 3 3v8h-5v-6H10v6z" fill="#8fd0f2" stroke="#4c9acb" /></Svg></TaskSlot>
    <TaskSlot $w={4} $ml={2} $box={0.3} />
    <TaskSlot $w={66}><Office c="#1f7244" l="X" /></TaskSlot>
    <TaskSlot $w={62}><Svg w={32}><ellipse cx="13" cy="10" rx="11" ry="9" fill="#f4e6e6" stroke="#c8332e" strokeWidth="2.500" /><path d="M8 8l16 15M12 6l8 18" stroke="#9aa3ad" strokeWidth="2.200" /><circle cx="18" cy="27" r="3" stroke="#2f86c9" strokeWidth="2" /><circle cx="26" cy="23" r="3" stroke="#2f86c9" strokeWidth="2" /></Svg></TaskSlot>
    <TaskSlot $w={59} $ml={1} $box={0.45}><Svg w={29} h={28}><path d="M1.500 1.500h26v25h-26z" fill="#2a0707" stroke="#d8281f" strokeWidth="3" /><path d="M7 21c3 0 8-8 7.500-13-.3-2-2-1.500-1.500.8 1 4 5 7.500 9 7.700 2 0 2-2 0-2-5 0-12 2.500-15 4.500-1.500 1-1.500 2 0 2z" stroke="#fff" strokeWidth="1.300" /></Svg></TaskSlot>
    <TaskSlot $w={54} $ml={3} $box={0.4}><Office c="#2a5699" l="W" /></TaskSlot>
    <TaskSlot $w={4} $ml={1} $box={0.3} />
    <TaskSlot $w={58} $ml={3} $box={0.8}><AvevaA s={32} /></TaskSlot>
    <TaskSlot $w={9} $ml={1074}><Grip /></TaskSlot>
    <TaskSlot $w={20} $ml={6}><SogouS /></TaskSlot>
    <TaskSlot $w={24}><Svg w={14}><circle cx="7" cy="7" r="6.500" fill="#1a1fa0" stroke="#cfd3e8" /><text x="7" y="11" textAnchor="middle" fontSize="11" fontWeight="700" fontFamily="Open Sans" fill="#fff">?</text></Svg></TaskSlot>
    <TaskSlot $w={20}><Svg w={9} h={18}><path d="M3 3V.5h5.500V4H6M.5 3h5v3h-5z" stroke="#fff" /><path d="M1 14h7l-3.500 3z" fill="#fff" /></Svg></TaskSlot>
    <TaskSlot $w={16}><Svg w={7} h={4}><path d="M0 4h7L3.500 0z" fill="#fff" /></Svg></TaskSlot>
    <TaskSlot $w={30}><Svg w={15} h={14}><path d="M1.500 0v14" stroke="#fff" strokeWidth="1.500" /><path d="M2 1h6v2h6l-2 2.500 2 2.500H7V7H2z" fill="#fff" /></Svg></TaskSlot>
    <TaskSlot $w={20}><Svg w={15} h={14}><path d="M4.500 3h9.500v7H4.500zM7 12.500h6M9.500 10v2M0 2h4M1 0v4M3 0v4M2 4v6h2" stroke="#fff" strokeWidth="1.200" /></Svg></TaskSlot>
    <TaskSlot $w={30}><Svg w={13} h={13}><path d="M0 4h3l4-4v13L3 9H0z" fill="#fff" /><path d="M9 4q2 2.500 0 5M11 2.500q3 4 0 8" stroke="#fff" /></Svg></TaskSlot>
    <Clock>4:00 PM<br />8/5/2022</Clock>
    <ShowDesktop />
  </Taskbar>
);

/* ---------- rule details dialogs ---------- */
const DialogShell = styled.div<{ $w: number; $h: number; $p: number }>`
  width: ${p => p.$w}px; height: ${p => p.$h}px; padding: ${p => p.$p}px; background: #f0f0f0; font-family: ${MONO};
`;
const FloatingDialog = styled(DialogShell)`position: absolute; left: 532px; top: 313px; border-top: 1px solid #f8f8f8; box-shadow: 0 0 1px #fff;`;
const DialogInner = styled.div<{ $h: number }>`height: ${p => p.$h}px; background: #f5f5f5; border: 1px dotted #c8c8c8; border-top: 0; display: flex; flex-direction: column;`;
const DialogTitle = styled.div<{ $h: number; $s: number; $bg: string }>`
  height: ${p => p.$h}px; margin: 0 -1px; background: ${p => p.$bg}; display: flex; align-items: center; justify-content: space-between; padding: 0 5px 0 2px;
  font-family: ${ARIAL}; font-size: ${p => p.$s}px; color: #111; border-bottom: 1px dotted #c8c8c8; flex: none;
`;
const Field = styled.div<{ $h: number; $mt: number; $lw: number; $pl: number; $w: number }>`
  display: flex; height: ${p => p.$h}px; margin-top: ${p => p.$mt}px; padding-left: ${p => p.$pl}px; align-items: center; flex: none;
  > span { width: ${p => p.$lw}px; padding-top: 3px; flex: none; }
  > div { width: ${p => p.$w}px; height: 100%; background: #fff; border: 1px solid #e3e9ef; border-top-color: #abadb3; border-radius: 2px; padding: 0 3px 1px; display: flex; align-items: center; }
`;
const TabStrip = styled.div<{ $ml: number; $mt: number; $h: number }>`display: flex; align-items: flex-end; height: ${p => p.$h}px; margin: ${p => p.$mt}px 0 0 ${p => p.$ml}px; flex: none;`;
const DlgTab = styled.div<{ $w: number; $h: number; $on?: boolean }>`
  width: ${p => p.$w}px; height: ${p => p.$h}px; border: 1px solid #8c8e94; border-bottom: 0; display: flex; align-items: center; justify-content: center;
  background: ${p => (p.$on ? "#fff" : "linear-gradient(#f2f2f2, #cfcfcf)")}; flex: none; position: relative; z-index: ${p => (p.$on ? 1 : 0)};
  ${p => p.$on && css`margin-bottom: -1px; padding-bottom: 2px;`}
`;
const TabPage = styled.div<{ $w: number; $h: number; $ml: number; $p: string }>`
  width: ${p => p.$w}px; height: ${p => p.$h}px; margin-left: ${p => p.$ml}px; border: 1px solid #8c8e94; background: #fff; padding: ${p => p.$p}; flex: none;
`;
const PageInner = styled.div<{ $p?: string }>`height: 100%; padding: ${p => p.$p || 0}; background: #f5f5f5; display: flex; flex-direction: column; position: relative;`;
const CriteriaRow = styled.div<{ $mt: number }>`
  display: flex; height: 20px; margin-top: ${p => p.$mt}px; align-items: center; padding-left: 9px; flex: none;
  > span:first-child { width: 56px; padding-top: 2px; }
`;
const Select = styled.div<{ $w: number; $hot?: boolean }>`
  width: ${p => p.$w}px; height: 20px; display: flex; align-items: center; justify-content: space-between; padding: 0 4px 0 3px; border-radius: 2px; flex: none;
  border: 1px solid ${p => (p.$hot ? "#3c6f95" : "#707070")};
  background: ${p => (p.$hot ? "linear-gradient(#dff2fb 0 10%, #bfe5f8 50%, #8ccbea 52%, #67b3dc)" : "linear-gradient(#f2f2f2, #dcdcdc 52%, #cfcfcf)")};
`;
const Require = styled.div`margin-left: 3px; margin-top: -3px; height: 20px; width: 110px; overflow: hidden; line-height: 12px; padding-top: 0; span { display: block; }`;
const AeroCheck = styled.div<{ $s: number; $ml: number; $mr?: number }>`
  width: ${p => p.$s}px; height: ${p => p.$s}px; margin-left: ${p => p.$ml}px; margin-right: ${p => p.$mr || 0}px; border: 1px solid #8e8f8f; background: #fff; padding: 1px; flex: none;
  > i { display: flex; width: 100%; height: 100%; border: 1px solid #c3c8d0; background: linear-gradient(135deg, #d5dae0, #fbfbfb); align-items: center; justify-content: center; }
`;
const AttrGrid = styled.div`margin-top: 5px; height: 391px; border-top: 2px solid #a0a0a0; border-bottom: 1.500px solid #a0a0a0; border-left: 1px solid #a0a0a0; background: #fff; flex: none;`;
const AttrRow = styled.div<{ $h: number; $head?: boolean }>`
  height: ${p => p.$h}px; display: flex; border: solid #a0a0a0; border-width: 0 1px 1.500px 0; font-family: ${ARIAL}; font-size: 11px;
  background: ${p => (p.$head ? "linear-gradient(#fff 45%, #f1f2f4)" : "#fff")}; align-items: center;
  > div:first-child { width: 39px; height: 100%; border-right: 1px solid #a0a0a0; display: flex; align-items: center; justify-content: center; background: linear-gradient(90deg, #fff, #f1f2f4); flex: none; }
`;
const AttrName = styled.div`padding-left: 7px;`;
const GridButton = styled.div`width: 100px; height: 100%; border: 1px solid #707070; background: linear-gradient(#f2f2f2, #cfcfcf); border-radius: 2px;`;
const DropList = styled.div`
  position: absolute; left: 65px; top: 53px; width: 316px; height: 218px; background: #fff; border: 1px solid #9aa3ad; box-shadow: 3px 3px 2px rgba(0,0,0,.4); z-index: 2;
`;
const Option = styled.div<{ $on?: boolean }>`height: 12px; line-height: 12px; padding-left: 2px; background: ${p => (p.$on ? "#3399ff" : "none")}; display: flex; align-items: center;`;
const LinkRow = styled.div<{ $h: number; $r?: boolean; $gap: number; $p: string }>`
  display: flex; height: ${p => p.$h}px; align-items: center; gap: ${p => p.$gap}px; justify-content: ${p => (p.$r ? "flex-end" : "flex-start")}; padding: ${p => p.$p}; flex: none;
`;
const ButtonRow = styled.div<{ $mt: number; $gap: number; $r: number }>`display: flex; justify-content: flex-end; gap: ${p => p.$gap}px; margin-top: ${p => p.$mt}px; padding-right: ${p => p.$r}px; flex: none;`;
const PushButton = styled.div<{ $w: number; $h: number }>`
  width: ${p => p.$w}px; height: ${p => p.$h}px; border: 1px solid #707070; border-radius: 3px; background: linear-gradient(#f4f4f4 0 48%, #dddddd 50%, #cfcfcf);
  display: flex; align-items: center; justify-content: center;
`;
const typeOptions = ["All", "Actuator", "Cable", "Duct", "Electrical connection", "Equipment", "Fitting", "HVAC fitting", "Instrument", "Multi-cable", "Nozzle",
  "Offline instrument", "Off-page connector, incoming", "Off-page connector, outgoing", "Pipe destination", "Sub-equipment", "Tube", "Valve"];
const Link = ({ s, children }: { s?: number; children: string }) => <Mono $s={s} $c="#0000ff" $u>{children}</Mono>;

const CriteriaDialog = () => (
  <FloatingDialog $w={609} $h={636} $p={7}>
    <DialogInner $h={621}>
      <DialogTitle $h={16} $s={12} $bg="#bbd5f1">Diagrams Rule Details<Cross /></DialogTitle>
      <Field $h={20} $mt={9} $lw={69} $pl={14} $w={502}><span><Mono>Name:</Mono></span><div><Mono>new rule</Mono></div></Field>
      <Field $h={20} $mt={1} $lw={69} $pl={14} $w={501}><span><Mono>Description</Mono></span><div /></Field>
      <TabStrip $ml={8} $mt={6} $h={21}>
        <DlgTab $w={160} $h={21} $on><Mono>Shape Selection Criteria</Mono></DlgTab>
        <DlgTab $w={107} $h={18}><Mono>Format to Assign</Mono></DlgTab>
        <DlgTab $w={82} $h={18}><Mono>Rule Options</Mono></DlgTab>
      </TabStrip>
      <TabPage $w={576} $h={488} $ml={8} $p="1px 1px 2px 3px">
        <PageInner>
          <CriteriaRow $mt={8}><span><Mono>Criteria:</Mono></span><Select $w={486}><Mono>Type &amp; attribute value</Mono><Down c="#000" w={8} /></Select></CriteriaRow>
          <CriteriaRow $mt={4}><span><Mono>Type:</Mono></span><Select $w={316} $hot><Mono>All</Mono><Down c="#000" w={8} /></Select>
            <AeroCheck $s={13} $ml={18}><i><Tick c="#3b53a4" /></i></AeroCheck>
            <Require><Mono>Require all the</Mono><Mono>following</Mono></Require>
          </CriteriaRow>
          <DropList>{typeOptions.map(o => <Option key={o} $on={o === "Equipment"}><Mono $c={o === "Equipment" ? "#fff" : "#000"}>{o}</Mono></Option>)}</DropList>
          <AttrGrid>
            <AttrRow $h={20} $head><div /><AttrName>Attri</AttrName></AttrRow>
            <AttrRow $h={23}><div><Svg w={6} h={6}><circle cx="3" cy="3" r="2.500" fill="#444" /></Svg></div><GridButton /></AttrRow>
          </AttrGrid>
          <LinkRow $h={16} $r $gap={0} $p="0 4px 0 0"><Link>Visio shape condition (Unset)</Link></LinkRow>
          <LinkRow $h={10} $gap={0} $p="0 0 0 4px"><Link>Highlight</Link><Link>Reset highlight</Link></LinkRow>
        </PageInner>
      </TabPage>
      <ButtonRow $mt={11} $gap={11} $r={9}><PushButton $w={72} $h={19}><Mono>Save</Mono></PushButton><PushButton $w={72} $h={19}><Mono>Reset</Mono></PushButton></ButtonRow>
    </DialogInner>
  </FloatingDialog>
);

const FormatGrid = styled.div`width: 655px; height: 451px; display: flex; border: 1px solid #8c8e94; border-right: 0; overflow: hidden; flex: none; background: #fff;`;
const FormatTable = styled.div`width: 638px; overflow: hidden; flex: none;`;
const FormatRow = styled.div<{ $h: number; $head?: boolean; $on?: boolean }>`
  height: ${p => p.$h}px; display: grid; grid-template-columns: 319px 319px; font-family: ${ARIAL}; font-size: 12.300px; color: #222; letter-spacing: -0.05px;
  background: ${p => (p.$head ? "linear-gradient(#fff 45%, #f1f2f4)" : "#fff")};
  > div { border-right: 1px solid ${p => (p.$head ? "#e0e0e0" : "#a0a0a0")}; border-bottom: 1px solid #a0a0a0; display: flex; align-items: center; padding: 2px 0 0 ${p => (p.$head ? 10 : 4)}px; }
  > div:first-child { ${p => p.$on && css`background: #3399ff; color: #fff;`} }
`;
const FormatScroll = styled.div`width: 17px; background: #f1f1f1; display: flex; flex-direction: column; align-items: center; justify-content: space-between; padding: 9px 0;`;
const ScrollThumb = styled.div`width: 15px; height: 302px; margin-bottom: 106px; border: 1px solid #979797; border-radius: 2px; background: linear-gradient(90deg, #f5f5f5, #d0d0d0); display: flex; align-items: center; justify-content: center;`;
const formats = ["Line colour", "Line pattern", "Line weight", "Line cap", "Line begin", "Line end", "Line begin size", "Line end size", "Line transparency",
  "Fill colour", "Fill pattern", "Fill pattern colour", "Fill transparency", "Layer", "Text font", "Text size"];
const FormatDialog = styled(DialogShell)`margin: 0 0 0 3px; border-bottom: 1px solid #c8ccd4; padding-top: 10px;`;
const M = 11.700;
const FormatDialogView = () => (
  <FormatDialog $w={713} $h={679} $p={9}>
    <DialogInner $h={658}>
      <DialogTitle $h={18} $s={14} $bg="#f5f5f5">Diagrams Rule Details<Cross s={10} /></DialogTitle>
      <Field $h={24} $mt={12} $lw={80} $pl={16} $w={588}><span><Mono $s={M}>Name:</Mono></span><div><Mono $s={M}>new rule</Mono></div></Field>
      <Field $h={23} $mt={1} $lw={80} $pl={16} $w={587}><span><Mono $s={M}>Description</Mono></span><div /></Field>
      <TabStrip $ml={12} $mt={7} $h={24}>
        <DlgTab $w={180} $h={22}><Mono $s={M}>Shape Selection Criteria</Mono></DlgTab>
        <DlgTab $w={130} $h={25} $on><Mono $s={M}>Format to Assign</Mono></DlgTab>
        <DlgTab $w={94} $h={22}><Mono $s={M}>Rule Options</Mono></DlgTab>
      </TabStrip>
      <TabPage $w={673} $h={502} $ml={10} $p="2px 2px 2px 3px">
        <PageInner $p="6px 0 0 8px">
          <FormatGrid>
            <FormatTable>
              <FormatRow $h={24} $head><div>Format type</div><div>Value</div></FormatRow>
              {formats.map((f, i) => <FormatRow key={f} $h={26.930} $on={i === 0}><div>{f}</div><div /></FormatRow>)}
            </FormatTable>
            <FormatScroll>
              <Svg w={8} h={4}><path d="M0 4h8L4 0z" fill="#444" /></Svg>
              <ScrollThumb><Svg w={8} h={9}><path d="M0 1h8M0 4h8M0 7h8" stroke="#777" strokeWidth="1.500" /></Svg></ScrollThumb>
              <Down c="#444" w={8} />
            </FormatScroll>
          </FormatGrid>
          <LinkRow $h={16} $r $gap={9} $p="3px 4px 0 0"><Link s={M}>Add format</Link><Link s={M}>Remove format</Link></LinkRow>
          <LinkRow $h={14} $gap={1} $p="0"><AeroCheck $s={15} $ml={1} $mr={2}><i /></AeroCheck><Mono $s={M}>Clear auto formattin</Mono><Link s={M}>Apply to matching shapes</Link></LinkRow>
        </PageInner>
      </TabPage>
      <ButtonRow $mt={13} $gap={12} $r={10}><PushButton $w={85} $h={22}><Mono $s={M}>Save</Mono></PushButton><PushButton $w={85} $h={22}><Mono $s={M}>Reset</Mono></PushButton></ButtonRow>
    </DialogInner>
  </FormatDialog>
);

/* ---------- Word ---------- */
const Word = styled.div`width: 1920px; height: 1080px; display: flex; flex-direction: column; background: #fff; color: #444; flex: none;`;
const WordTop = styled.div`height: 25px; display: flex; align-items: center; padding: 0 10px; flex: none;`;
const TopSlot = styled.div<{ $w: number }>`width: ${p => p.$w}px; display: flex; align-items: center; justify-content: center; flex: none; padding-bottom: 2px;`;
const DocTitle = styled.div`margin-left: 610px; width: 420px; color: #a6a6a6; font-size: 12px; letter-spacing: 0.320px; white-space: nowrap;`;
const WordTabs = styled.div`height: 25px; display: flex; border-bottom: 1px solid #d4d4d4; flex: none;`;
const WordTab = styled.div<{ $w: number; $k?: string }>`
  width: ${p => p.$w}px; display: flex; align-items: center; justify-content: center; flex: none; letter-spacing: 0.100px;
  ${p => p.$k === "file" && css`background: #2b579a; color: #fff; margin-right: 5px; height: 25px;`}
  ${p => p.$k === "on" && css`color: #2b579a; border: 1px solid #d4d4d4; border-bottom: 0; background: #fff; height: 25px;`}
`;
const UserName = styled.div`margin-left: auto; display: flex; align-items: center; gap: 8px; padding-right: 10px;`;
const WordRibbon = styled.div`height: 94px; display: flex; border-bottom: 1px solid #d4d4d4; flex: none;`;
const WGroup = styled.div<{ $w: number; $pl?: number }>`
  width: ${p => p.$w}px; padding-left: ${p => p.$pl || 0}px; display: flex; flex-direction: column; flex: none;
  background: linear-gradient(#e1e1e1, #e1e1e1) right 4px / 1px 84px no-repeat;
`;
const WBody = styled.div`height: 75px; display: flex; flex: none;`;
const WName = styled.div<{ $l: number; $mt?: number; $r?: number }>`height: 18px; margin-top: ${p => p.$mt || 0}px; display: flex; align-items: center; justify-content: space-between; padding: 0 ${p => p.$r || 5}px 0 ${p => p.$l}px; color: #666;`;
const ToolRow = styled.div<{ $mt: number }>`height: 22px; margin-top: ${p => p.$mt}px; display: flex; align-items: center;`;
const Slot = styled.div<{ $w: number; $on?: boolean }>`width: ${p => p.$w}px; height: 22px; display: flex; align-items: center; justify-content: center; flex: none; background: ${p => (p.$on ? "#c2d5f2" : "none")};`;
const SlotBar = styled.div<{ $w: number }>`width: ${p => p.$w}px; height: 22px; background: linear-gradient(#dcdcdc, #dcdcdc) center / 1px 20px no-repeat; flex: none;`;
const FontBox = styled.div<{ $w: number }>`width: ${p => p.$w}px; height: 22px; border: 1px solid #ababab; display: flex; align-items: center; justify-content: space-between; padding: 0 4px 0 2px; color: #222; white-space: nowrap; margin-right: -1px; flex: none; span { overflow: hidden; letter-spacing: -0.3px; }`;
const Launcher = () => <Svg w={7}><path d="M.5 6V.5H6M3 3l3 3M6.500 3v3.500H3" stroke="#999" /></Svg>;
const PasteCol = styled.div`width: 50px; padding-top: 7px; display: flex; flex-direction: column; align-items: center; gap: 1px; span { line-height: 18px; }`;
const ThreeRows = styled.div<{ $pt: number }>`padding-top: ${p => p.$pt}px; display: flex; flex-direction: column;`;
const WSmall = styled.div<{ $dim?: boolean }>`height: 23px; display: flex; align-items: center; gap: 4px; white-space: nowrap; color: ${p => (p.$dim ? "#a6a6a6" : "#444")};`;
const Gallery = styled.div`margin: 5px 0 0 5px; width: 954px; height: 61px; border: 1px solid #ababab; display: flex; padding-left: 0; flex: none;`;
const StyleCard = styled.div<{ $on?: boolean }>`
  width: 72.150px; height: 57px; margin-top: 1px; border: 3px solid ${p => (p.$on ? "#c2d5f2" : "transparent")}; display: flex; flex-direction: column; align-items: center; flex: none; white-space: nowrap; color: #666;
`;
const Preview = styled.div<{ $s: number; $f?: string; $c?: string; $b?: boolean; $i?: boolean; $u?: boolean }>`
  width: 60px; height: 27px; overflow: hidden; display: flex; align-items: center; font-family: ${p => p.$f || "Lato, sans-serif"}; font-size: ${p => p.$s}px; color: ${p => p.$c || "#000"};
  font-weight: ${p => (p.$b ? 700 : 400)}; font-style: ${p => (p.$i ? "italic" : "normal")}; margin-top: 4px; margin-bottom: 3px; padding-top: 2px;
  ${p => p.$u && css`border-bottom: 2px solid #365f91; height: 26px; margin-bottom: 4px; padding-bottom: 2px;`}
`;
const GalleryScroll = styled.div`width: 15px; margin-left: auto; border-left: 1px solid #ababab; display: flex; flex-direction: column; div { flex: 1; display: flex; align-items: center; justify-content: center; border-bottom: 1px solid #ababab; } div:last-child { border-bottom: 0; }`;
const AcroBtn = styled.div<{ $w: number }>`width: ${p => p.$w}px; padding-top: 7px; display: flex; flex-direction: column; align-items: center; line-height: 15.500px; white-space: nowrap; text-align: center; svg { margin-bottom: 3px; }`;
const AcroLatin = styled.span`font-size: 12.500px; letter-spacing: 0.250px; white-space: nowrap;`;

const A = ({ w = 16, d, c = "#666", t = 1.200 }: { w?: number; d: string; c?: string; t?: number }) => <Svg w={w} h={16}><path d={d} stroke={c} strokeWidth={t} /></Svg>;
const SERIF = `"Liberation Serif", serif`;
const cards: [string, any][] = [
  ["标题 2", { $s: 20, $f: SERIF, $b: true, t: "AaBb(" }],
  ["标题 3", { $s: 18, $b: true, t: "AaBbC" }],
  ["↲ 正文", { $s: 12.500, t: "AaBbCcDd" }],
  ["↲ 无间隔", { $s: 12.500, t: "AaBbCcDd" }],
  ["标题 1", { $s: 14.500, $f: SERIF, $b: true, $c: "#365f91", $u: true, t: "AaBbCcl" }],
  ["标题 4", { $s: 18, $f: SERIF, $b: true, t: "AaBbC" }],
  ["标题", { $s: 20, $f: SERIF, $b: true, t: "AaBb(" }],
  ["副标题", { $s: 20, $f: SERIF, $b: true, t: "AaBb(" }],
  ["不明显强调", { $s: 12.500, $i: true, $c: "#666", t: "AaBbCcDd" }],
  ["强调", { $s: 12.500, $i: true, t: "AaBbCcDd" }],
  ["明显强调", { $s: 12.500, $i: true, $c: "#4f81bd", t: "AaBbCcDd" }],
  ["要点", { $s: 12.500, $b: true, t: "AaBbCcDd" }],
  ["引用", { $s: 12.500, $i: true, $c: "#333", t: "AaBbCcDd" }],
];
const UnderA = ({ ch, bar, c = "#444" }: any) => <Svg w={17}><text x="8.500" y="11" textAnchor="middle" fontSize="12" fontWeight="600" fontFamily="Open Sans" fill={c}>{ch}</text><path d="M1 14h15" stroke={bar} strokeWidth="4" /></Svg>;

const WordHeader = () => (
  <>
    <WordTop>
      <TopSlot $w={17}><Svg w={16}><path d="M8 2h7.500v12H8z" fill="#fff" stroke="#2b579a" /><path d="M10 5h4M10 8h4M10 11h4" stroke="#2b579a" /><path d="M0 2l9-2v16l-9-2z" fill="#2b579a" /><path d="M2 5l1.200 6L4.500 6l1.300 5L7 5" stroke="#fff" /></Svg></TopSlot>
      <TopSlot $w={40}><Svg w={14}><path d="M1 1h12v12H1z" fill="#fff" stroke="#8a5fb5" strokeWidth="2" /><path d="M3.500 1v4.500h7V1M4 13V9h6v4" stroke="#8a5fb5" strokeWidth="1.500" /></Svg></TopSlot>
      <TopSlot $w={18}><Svg w={15}><path d="M5 1L1 5l4 4M1 5h8q5 0 4.500 4.500T8 14" stroke="#3e78b3" strokeWidth="2.300" /></Svg></TopSlot>
      <TopSlot $w={16}><Down w={5} /></TopSlot>
      <TopSlot $w={30}><Svg w={15}><path d="M9 2.500A5.500 5.500 0 113.500 4M9 0h4v4.500" stroke="#3e78b3" strokeWidth="2.200" /></Svg></TopSlot>
      <TopSlot $w={18}><Svg w={6} h={7}><path d="M0 .5h6M0 3h6L3 6z" stroke="#777" fill="#777" strokeWidth=".8" /></Svg></TopSlot>
      <DocTitle>KF-10006-OM-01-Diagram用户操作手册-new2.docx [兼容模式] - Word</DocTitle>
      <WindowKeys $gap={19} $r={0}>
        <Glyph $s={14} $c="#999" $b>?</Glyph><BoxUp c="#999" /><Minus c="#999" /><Restore c="#999" t={1.200} /><Cross s={11} c="#999" t={1.600} />
      </WindowKeys>
    </WordTop>
    <WordTabs>
      <WordTab $w={59} $k="file">文件</WordTab><WordTab $w={50} $k="on">开始</WordTab>
      <WordTab $w={54}>插入</WordTab><WordTab $w={53}>设计</WordTab><WordTab $w={67}>页面布局</WordTab><WordTab $w={63}>引用</WordTab>
      <WordTab $w={53}>邮件</WordTab><WordTab $w={53}>审阅</WordTab><WordTab $w={53}>视图</WordTab><WordTab $w={80}>ACROBAT</WordTab>
      <UserName>朱文涛<Down w={5} /><Svg w={25} h={24}><path d="M0 0h25v24H0z" fill="#b5b5b5" /><circle cx="12.500" cy="9" r="5.500" fill="#fff" /><path d="M3.500 24q0-8 9-8t9 8z" fill="#fff" /></Svg></UserName>
    </WordTabs>
    <WordRibbon>
      <WGroup $w={116}>
        <WBody>
          <PasteCol><Svg w={29} h={31}><path d="M1 5h23v23H1z" fill="#eec97f" /><path d="M6 7V3h4q2-4 4 0h5v4z" fill="#666" /><path d="M13.500 12.500h10l5 5v13h-15z" fill="#fff" stroke="#777" /><path d="M23.500 12.500v5h5" stroke="#777" /></Svg><span>粘贴</span><Down w={5} /></PasteCol>
          <ThreeRows $pt={2}>
            <WSmall $dim><A w={14} d="M3 1l7 10M11 1L4 11M3 11a2 2 0 100 4 2 2 0 000-4M11 11a2 2 0 100 4 2 2 0 000-4" c="#b0b0b0" t={1.500} />剪切</WSmall>
            <WSmall $dim><A w={14} d="M1 1h7v10H1zM5.500 4.500h5l3 3V15h-8zM7.500 9h4M7.500 12h4" c="#b0b0b0" />复制</WSmall>
            <WSmall><Svg w={14}><path d="M1 8l6-2 3 4-4 5z" fill="#eec27a" /><path d="M6 6l3-2 4-4 2 2-4 4-1 3z" fill="#666" /></Svg>格式刷</WSmall>
          </ThreeRows>
        </WBody>
        <WName $l={31}>剪贴板<Launcher /></WName>
      </WGroup>
      <WGroup $w={309} $pl={4}>
        <ToolRow $mt={11}>
          <FontBox $w={92}><span>宋体 (中文正文</span><Down w={5} /></FontBox><FontBox $w={47}><span>五号</span><Down w={5} /></FontBox>
          <Slot $w={25}><Svg w={16}><text x="0" y="14" fontSize="15" fontFamily="Open Sans" fill="#555">A</text><path d="M9 4h6L12 1z" fill="#3e78b3" /></Svg></Slot>
          <Slot $w={20}><Svg w={14}><text x="0" y="14" fontSize="12" fontFamily="Open Sans" fill="#555">A</text><path d="M8 1h6l-3 3z" fill="#3e78b3" /></Svg></Slot>
          <SlotBar $w={10} /><Slot $w={22}><Glyph $s={13} $c="#555">Aa</Glyph></Slot><Slot $w={8}><Down w={5} /></Slot><SlotBar $w={16} />
          <Slot $w={17}><Svg w={16}><path d="M5 8l5-5 5 5-5 5H7z" fill="#ef9aa5" /><path d="M1 10L4 2l3 8M2 7h4" stroke="#555" /></Svg></Slot>
          <Slot $w={24}><Svg w={16} h={18}><text x="8" y="7" textAnchor="middle" fontSize="8" fontFamily="Open Sans" fill="#444">wén</text><text x="8" y="17" textAnchor="middle" fontSize="10" fontFamily="Noto Sans CJK SC" fill="#3e78b3">文</text></Svg></Slot>
          <Slot $w={18}><Svg w={16}><path d="M.7.7h14.600v14.600H.7z" stroke="#3e78b3" strokeWidth="1.400" /><text x="8" y="13" textAnchor="middle" fontSize="13" fontFamily="Open Sans" fill="#333">A</text></Svg></Slot>
        </ToolRow>
        <ToolRow $mt={10}>
          <Slot $w={20}><Glyph $s={13} $b>B</Glyph></Slot><Slot $w={26}><Glyph $s={14} $i $b $f={SERIF}>I</Glyph></Slot>
          <Slot $w={16}><Svg w={10} h={15}><path d="M1.500 1v6q0 3.500 3.500 3.500T8.500 7V1" stroke="#444" strokeWidth="1.700" /><path d="M0 13.500h10" stroke="#444" /></Svg></Slot>
          <Slot $w={18}><Down w={5} /></Slot>
          <Slot $w={18}><Svg w={17} h={12}><text x="0" y="10" fontSize="10" fontFamily="Open Sans" fill="#444">abc</text><path d="M0 7h17" stroke="#444" /></Svg></Slot>
          <Slot $w={26}><Svg w={13} h={14}><path d="M1 3l6 8M7 3l-6 8" stroke="#444" strokeWidth="1.600" /><text x="8" y="14" fontSize="7" fontFamily="Open Sans" fill="#3e78b3">2</text></Svg></Slot>
          <Slot $w={18}><Svg w={13} h={14}><path d="M1 3l6 8M7 3l-6 8" stroke="#444" strokeWidth="1.600" /><text x="8" y="5" fontSize="7" fontFamily="Open Sans" fill="#3e78b3">2</text></Svg></Slot>
          <SlotBar $w={12} /><Slot $w={20}><Glyph $s={15} $c="#b8b8b8">A</Glyph></Slot><Slot $w={8}><Down w={5} c="#bbb" /></Slot>
          <Slot $w={30}><Svg w={17}><text x="0" y="8" fontSize="9" fontFamily="Open Sans" fill="#444">ab</text><path d="M6 11l8-10 2 2-8 8z" fill="#666" /><path d="M0 14h16" stroke="#ff0" strokeWidth="4" /></Svg></Slot><Slot $w={6}><Down w={5} /></Slot>
          <Slot $w={26}><UnderA ch="A" bar="#f00" /></Slot><Slot $w={6}><Down w={5} /></Slot>
          <Slot $w={30}><Svg w={15} h={16}><path d="M0 0h15v16H0z" fill="#aaa" /><text x="7.500" y="13" textAnchor="middle" fontSize="13" fontFamily="Open Sans" fill="#333">A</text></Svg></Slot>
          <Slot $w={16}><Svg w={16}><circle cx="8" cy="8" r="7.300" stroke="#555" /><text x="8" y="11.500" textAnchor="middle" fontSize="9" fontFamily="Noto Sans CJK SC" fill="#444">字</text></Svg></Slot>
        </ToolRow>
        <WName $l={130} $mt={10}>字体<Launcher /></WName>
      </WGroup>
      <WGroup $w={266} $pl={5}>
        <ToolRow $mt={11}>
          <Slot $w={18}><Svg w={14}><path d="M0 2h3M0 7h3M0 12h3" stroke="#3e78b3" strokeWidth="2.500" /><path d="M5 2h9M5 7h9M5 12h9" stroke="#666" /></Svg></Slot><Slot $w={14}><Down w={5} /></Slot>
          <Slot $w={22}><Svg w={14}><path d="M1 0v4M0 7h2.500M0 10h2.500v4H0" stroke="#3e78b3" /><path d="M5 2h9M5 7h9M5 12h9" stroke="#666" /></Svg></Slot><Slot $w={10}><Down w={5} /></Slot>
          <Slot $w={26}><Svg w={16}><path d="M1 0v3M4 6h2v3H4zM8 12v4" stroke="#3e78b3" /><path d="M4 2h12M8 8h8M11 14h5" stroke="#666" /></Svg></Slot><Slot $w={5}><Down w={5} /></Slot>
          <SlotBar $w={14} />
          <Slot $w={20}><Svg w={16} h={14}><path d="M6 7H1M4 4L1 7l3 3" stroke="#3e78b3" strokeWidth="1.800" /><path d="M1 1h15M8 4h8M8 7h8M8 10h8M1 13h15" stroke="#666" /></Svg></Slot>
          <Slot $w={24}><Svg w={16} h={14}><path d="M0 7h5M3 4l3 3-3 3" stroke="#3e78b3" strokeWidth="1.800" /><path d="M1 1h15M8 4h8M8 7h8M8 10h8M1 13h15" stroke="#666" /></Svg></Slot>
          <SlotBar $w={10} />
          <Slot $w={20}><Svg w={16}><path d="M3 0L0 3l3 2M13 0l3 3-3 2" stroke="#3e78b3" strokeWidth="1.500" /><path d="M3 15L8 3l5 12M4 11h8" stroke="#555" strokeWidth="1.500" /></Svg></Slot><Slot $w={6}><Down w={5} /></Slot>
          <SlotBar $w={18} />
          <Slot $w={14}><Svg w={13} h={16}><path d="M0 7l3-7 3 7M1 5h4" stroke="#3e78b3" strokeWidth="1.200" /><path d="M0 9h5l-5 6h5" stroke="#8a4fa0" strokeWidth="1.300" /><path d="M10 1v13M8 12l2 3 2-3" stroke="#666" /></Svg></Slot>
          <SlotBar $w={12} />
          <Slot $w={22}><Svg w={11} h={16}><path d="M10 0v5H4M6 3L4 5l2 2M4 9v7M1 12h6" stroke="#555" /></Svg></Slot>
        </ToolRow>
        <ToolRow $mt={10}>
          <Slot $w={18}><A w={14} d="M0 3h14M0 6.500h9M0 10h14M0 13.500h9" /></Slot><Slot $w={26}><A w={14} d="M0 3h14M2 6.500h10M0 10h14M2 13.500h10" /></Slot>
          <Slot $w={18}><A w={14} d="M0 3h14M5 6.500h9M0 10h14M5 13.500h9" /></Slot><Slot $w={2} /><Slot $w={22} $on><A w={14} d="M0 3h14M0 6.500h14M0 10h14M0 13.500h14" /></Slot>
          <Slot $w={22}><Svg w={16}><path d="M1 0v16M15 0v16M3 7h10M3 10h10M3 13h10" stroke="#666" /><path d="M3 3h10M5 1L3 3l2 2M11 1l2 2-2 2" stroke="#3e78b3" strokeWidth="1.300" /></Svg></Slot>
          <SlotBar $w={12} />
          <Slot $w={18}><Svg w={15}><path d="M3 1v13M1 4l2-3 2 3M1 11l2 3 2-3" stroke="#3e78b3" strokeWidth="1.500" /><path d="M7 3h8M7 6h8M7 9h8M7 12h8" stroke="#666" /></Svg></Slot><Slot $w={8}><Down w={5} /></Slot>
          <SlotBar $w={18} />
          <Slot $w={14}><Svg w={17}><path d="M2 7l6-6 6 6-5 5H6z" stroke="#666" /><path d="M13 5q4 3 2 6" stroke="#3e78b3" strokeWidth="2" /><path d="M1 13h14v2.500H1z" fill="#fff" stroke="#888" /></Svg></Slot><Slot $w={18}><Down w={5} /></Slot>
          <Slot $w={16}><Svg w={14}><path d="M.5.5h13v13H.5zM7 0v14M0 7h14" stroke="#888" strokeDasharray="1 1.500" /><path d="M0 13.500h14" stroke="#444" /></Svg></Slot><Slot $w={16}><Down w={5} /></Slot>
        </ToolRow>
        <WName $l={106} $mt={10}>段落<Launcher /></WName>
      </WGroup>
      <WGroup $w={966}>
        <WBody><Gallery>
          {cards.map(([label, { t, ...p }], i) => <StyleCard key={i} $on={i === 2}><Preview {...p}>{t}</Preview><span>{label}</span></StyleCard>)}
          <GalleryScroll><div><Svg w={5} h={3}><path d="M0 3h5L2.500 0z" fill="#bbb" /></Svg></div><div><Down w={5} /></div><div><Svg w={6} h={7}><path d="M0 .5h6M0 3h6L3 6z" stroke="#666" fill="#666" strokeWidth=".8" /></Svg></div></GalleryScroll>
        </Gallery></WBody>
        <WName $l={462}>样式<Launcher /></WName>
      </WGroup>
      <WGroup $w={75} $pl={6}>
        <WBody><ThreeRows $pt={2}>
          <WSmall><Svg w={15} h={14}><path d="M2 4q2-5 4-1v10H0V8zM13 4q-2-5-4-1v10h6V8zM6 5h3v4H6z" fill="#555" /></Svg>查找<Down w={5} /></WSmall>
          <WSmall><Svg w={16}><text x="1" y="7" fontSize="9" fontFamily="Open Sans" fill="#666">ab</text><text x="4" y="15" fontSize="9" fontFamily="Open Sans" fill="#3e78b3">ac</text></Svg>替换</WSmall>
          <WSmall><Svg w={15}><path d="M4 1v12l3-3 2 5 2-1-2-5h4z" stroke="#666" /></Svg>选择<Down w={5} /></WSmall>
        </ThreeRows></WBody>
        <WName $l={19} $r={20}>编辑</WName>
      </WGroup>
      <WGroup $w={121} $pl={4}>
        <WBody>
          <AcroBtn $w={70}><Svg w={26} h={28}><path d="M8 26H2V2h10l5 5v6M12 2v6h5M12 18v8h12v-8M18 22v-11M14.500 14.500L18 11l3.500 3.500" stroke="#1473e6" strokeWidth="2.200" /></Svg>创建并共享<AcroLatin>Adobe PDF</AcroLatin></AcroBtn>
          <AcroBtn $w={42}><Svg w={32} h={28}><path d="M1 25h11M1 25q-1-4 4-6 4-1 3-4-5-5-3-10 1-4 6-4t6 4q2 5-2 10-1 3 1 4" stroke="#1473e6" strokeWidth="2.200" /><path d="M15 18l4 5M19 18l-4 5M21 23l3-4 1 4 3-4 1 3 2-2M15 27h17" stroke="#1473e6" strokeWidth="1.600" /></Svg>请求<br />签名</AcroBtn>
        </WBody>
        <WName $l={11}><AcroLatin>Adobe Acrobat</AcroLatin></WName>
      </WGroup>
      <CollapseMark><Svg w={9} h={7}><path d="M1 6l3.500-4L8 6" stroke="#555" strokeWidth="1.800" /></Svg></CollapseMark>
    </WordRibbon>
  </>
);

const WordBody = styled.div`height: 913px; display: flex; background: linear-gradient(#fff, #fafafa 25%, #eee); flex: none;`;
const NavPane = styled.div`width: 382px; border-right: 1px solid #c6c6c6; padding: 0 0 0 14px; flex: none;`;
const NavHead = styled.div`display: flex; align-items: center; height: 32px; padding-top: 20px; font-size: 20.500px; color: #2b579a; gap: 12px; svg { margin-top: -6px; }`;
const NavSearch = styled.div`width: 349px; height: 25px; margin-top: 23px; border: 1px solid #ababab; background: #fff; display: flex; align-items: center; padding: 0 4px 0 2px; color: #777; gap: 8px;`;
const NavTabs = styled.div`display: flex; align-items: center; height: 26px; margin-top: 12px; padding-left: 1px; b { color: #2b579a; }`;
const JumpUp = styled.div`width: 323px; height: 18px; margin: 8px 0 0 15px; border: 1px solid #ababab; background: #fff; display: flex; align-items: center; justify-content: center;`;
const NavRow = styled.div<{ $d: number }>`height: 21px; display: flex; align-items: center; padding-left: ${p => 3 + p.$d * 16}px;`;
const NavTwist = styled.div`width: 14px; padding-left: 2px; flex: none;`;
const NavLabel = styled.div<{ $on?: boolean }>`
  white-space: nowrap; letter-spacing: 0.200px; padding-left: 4px; height: 20px; line-height: 19px; color: #444;
  ${p => p.$on && css`background: #c2d5f2; width: 304px; margin-left: -1px; padding-left: 5px;`}
`;
const navRows: [number, string, boolean?][] = [
  [0, "1 Diagram软件介绍"], [0, "2 Diagram绘图工作流程"], [0, "3 Diagram安装及操作", true], [1, "3.1 安装及配置要求"], [1, "3.2 进入Diagram及程序设置"],
  [1, "3.3 Diagram软件操作界面介绍"], [1, "3.3 设置图纸对象缺省", true], [2, "3.3.1 设置存储层次"], [2, "3.3.2 设置区域及单元号"], [1, "3.4 选择背景图框模板新建图纸"],
  [1, "3.5 背景页设置及导入背景图纸（可选）"], [1, "3.6 导入非标设备", true], [2, "注意事项："], [1, "3.7添加标准设备"], [1, "3.8 添加设备管嘴"],
  [1, "3.9 添加管线（包括次管线拖拽）", true], [2, "3.9.1添加管线具体操作"], [2, "3.9.2添加Branch"], [2, "3.9.3管线添加管线号和箭头标签"], [2, "添加管线Pipe和Branch注意事项:"],
  [1, "3.10 阀门、管件的绘制", true], [2, "3.10.1 阀门"], [2, "3.10.2 三通"], [2, "3.10.3 异径管"], [2, "3.10.4 其他管件"], [1, "3.11 OPC添加及关联"], [1, "3.12分界符"],
  [1, "3.13仪表、仪表连接线、信号线的绘制及标注"], [1, "3.13.1 添加在线仪表"], [1, "3.12.2 添加离线仪表"], [0, "4 Diagram图纸一致性检验"], [0, "5 其他", true],
  [1, "5.1批量修改元件属性"], [1, "5.2批量修改图面属性"], [1, "5.2批量修改线宽线型"],
];
const Page = styled.div`width: 1032px; margin-left: 244px; background: #fff; border: solid #c6c6c6; border-width: 0 1px; padding: 15px 0 0 155px; flex: none;`;
const Paragraph = styled.div`margin-top: 13px; width: 740px; line-height: 27px; font-family: ${UI}; font-size: 15.300px; color: #000; white-space: nowrap;`;
const ParaLine = styled.div`display: flex; height: 27px;`;
const Run = styled.span<{ $w: number; $cjk?: boolean }>`
  width: ${p => p.$w}px; flex: none;
  ${p => p.$cjk && css`font-size: 18px; font-weight: 300; letter-spacing: 0.100px; font-feature-settings: "halt" 1;`}
`;
const WordStatus = styled.div`height: 23px; background: #2b579a; color: #fff; display: flex; align-items: center; padding: 0 8px; border-bottom: 1px solid #9a9a9a; flex: none;`;
const StatusCell = styled.div<{ $w: number; $on?: boolean; $pl?: number }>`width: ${p => p.$w}px; height: 22px; padding-left: ${p => p.$pl || 0}px; display: flex; align-items: center; flex: none; white-space: nowrap; ${p => p.$on && css`background: #1e4480; justify-content: center;`}`;
const ZoomLine = styled.div`width: 100px; height: 1px; background: #fff; margin: 0 4px 0 3px; display: flex; align-items: center; padding-left: 50px; gap: 2px;`;
const Ime = styled.div`
  position: absolute; left: 3500px; top: 773px; width: 169px; height: 22px; border: 1px solid #9fb0c2; background: linear-gradient(#fff, #f2f8fc);
  display: flex; align-items: center; padding-left: 1px; > div { width: 20.200px; display: flex; justify-content: center; }
`;
const BL = "#4d94d6";

const WordView = () => (
  <Word>
    <WordHeader />
    <WordBody>
      <NavPane>
        <NavHead>导航<Grow /><Svg w={9} h={5}><path d="M0 0h9L4.500 5z" fill="#777" /></Svg><Cross s={10} c="#777" t={1.800} /><ThinSpace $w={0} /></NavHead>
        <NavSearch>搜索文档<Grow /><Svg w={14}><circle cx="8.500" cy="5.500" r="4.300" stroke="#3e78b3" strokeWidth="1.600" /><path d="M5.500 8.500L1 13" stroke="#3e78b3" strokeWidth="2.200" /></Svg><Down w={6} /></NavSearch>
        <NavTabs><b>标题</b><ThinBar $m={12} />页面<ThinBar $m={12} />结果</NavTabs>
        <JumpUp><Svg w={8} h={6}><path d="M0 .5h8" stroke="#444" /><path d="M0 6h8L4 2z" fill="#444" /></Svg></JumpUp>
        {navRows.map(([d, t, open], i) => (
          <NavRow key={i} $d={d}><NavTwist>{open && <Svg w={6}><path d="M6 0v6H0z" fill="#444" /></Svg>}</NavTwist><NavLabel $on={i === navRows.length - 1}>{t}</NavLabel></NavRow>
        ))}
      </NavPane>
      <Page>
        <FormatDialogView />
        <Paragraph>
          <ParaLine>
            <Run $w={95.500} $cjk>在此窗口的</Run><Run $w={94}>Line pattern</Run><Run $w={23.500} $cjk>和</Run><Run $w={89}>Line weight</Run>
            <Run $w={249} $cjk>可以定义想设定的线型和线宽。</Run><Run $w={84} $cjk>设定完后，</Run><Run $w={41} $cjk>进入</Run><Run $w={45}>Shade</Run>
          </ParaLine>
          <ParaLine><Run $w={132}>Selection Criteria</Run><Run $w={200} $cjk>窗口选择适用的对象。</Run></ParaLine>
        </Paragraph>
      </Page>
    </WordBody>
    <WordStatus>
      <StatusCell $w={123}>第 49 页，共 49 页</StatusCell><StatusCell $w={75}>7164 个字</StatusCell>
      <StatusCell $w={32}><Svg w={15} h={13}><path d="M7 2Q4 0 1 1v10q3-1 6 1V2q2-1 3-1M7 12q3-2 5-1" stroke="#fff" /><path d="M10 3l4 5M14 3l-4 5" stroke="#fff" strokeWidth="1.300" /></Svg></StatusCell>
      <StatusCell $w={75}>中文(中国)</StatusCell>
      <StatusCell $w={20}><Svg w={14} h={13}><circle cx="3" cy="3" r="3" fill="#fff" /><path d="M7 2.500h6.500v10H1.500V7M4 7h7M4 9.500h7" stroke="#fff" /></Svg></StatusCell>
      <Grow />
      <StatusCell $w={27}><Svg w={14} h={13}><path d="M7 2Q4 0 .5 1v10q4-1 6.500 1 2.500-2 6.500-1V1Q10 0 7 2zM7 2v10M2 4h3M2 6.500h3M2 9h3M9 4h3M9 6.500h3M9 9h3" stroke="#fff" /></Svg></StatusCell>
      <StatusCell $w={38} $on><Svg w={14} h={13}><path d="M.5.5h13v12H.5zM2.500 3h9M2.500 5.500h9M2.500 8h9M2.500 10.500h9" stroke="#fff" /></Svg></StatusCell>
      <StatusCell $w={12} />
      <StatusCell $w={31}><Svg w={14} h={13}><path d="M5 12.500H.5V.5h11V5M2.500 3h7M2.500 5.500h5M2.500 8h3" stroke="#fff" /><circle cx="10" cy="9" r="4" fill="#dfe8f5" /></Svg></StatusCell>
      <Svg w={6} h={3}><path d="M0 1.500h6" stroke="#fff" strokeWidth="2" /></Svg>
      <ZoomLine><Svg w={1} h={5}><path d="M.5 0v5" stroke="#fff" /></Svg><Svg w={4} h={11}><path d="M0 0h4v11H0z" fill="#fff" /></Svg></ZoomLine>
      <Svg w={8}><path d="M0 4h8M4 0v8" stroke="#fff" strokeWidth="2" /></Svg>
      <StatusCell $w={48} $pl={17}>130%</StatusCell>
    </WordStatus>
  </Word>
);
const ThinSpace = styled.i<{ $w: number }>`width: ${p => p.$w}px;`;
const DocKeys = styled(WindowKeys)`align-self: center;`;

export default function App() {
  return (
    <Desktop>
      <Global />
      <Aveva>
        <QuickBar>
          <AvevaA s={16} />
          <QuickPill>
            <OpenFolder /><Floppy />
            <Svg w={17}><path d="M1 2q4-3 8 0v8q-4 3-8 0z" fill="#f0a33c" stroke="#a8661a" /><path d="M8 7h8v6H8z" fill="#7fa5dd" stroke="#345" /><path d="M3 12v3h4M12 13v2" stroke="#345" /></Svg>
            <Svg w={14} h={15}><path d="M1 1h12v9H6l-3 4v-4H1zM3.500 4h7M3.500 7h7" stroke="#777" strokeWidth="1.200" /></Svg>
            <ThinBar $m={-3} />
            <Svg w={15}><path d="M1 1h8v8H1z" fill="#fff" stroke="#c22" strokeWidth="1.800" /><path d="M7 6h7v8H7z" fill="#fff" stroke="#555" /></Svg>
            <Svg w={6} h={7}><path d="M0 .5h6M0 3h6L3 6z" stroke="#111" fill="#111" strokeWidth=".8" /></Svg>
          </QuickPill>
          <AppTitle>AVEVA Diagrams (Project - CEC) - Pipe - [test]</AppTitle>
          <WindowKeys $gap={11} $r={6}><BoxUp /><Minus /><Restore /><Cross s={8} /></WindowKeys>
        </QuickBar>
        <TabBar>
          <AppTab $w={58} $kind="file">Project</AppTab><AppTab $w={63}>Home</AppTab><AppTab $w={58}>Tools</AppTab><AppTab $w={75}>Manage</AppTab>
          <AppTab $w={60}>Insert</AppTab><AppTab $w={55}>View</AppTab><AppTab $w={66} $kind="on">Admin</AppTab><AppTab $w={95}>AVEVA NET</AppTab><AppTab $w={79}>TOOLKIT</AppTab>
          <DocKeys $gap={8} $r={8}>
            <Svg w={11} h={10}><path d="M0 5l5-5v3h6v4H5v3z" fill="#111" /></Svg><Down c="#111" w={5} />
            <Svg w={11} h={10}><path d="M11 5L6 0v3H0v4h6v3z" fill="#777" /></Svg><Down c="#777" w={5} />
            <Svg w={12}><path d="M1 2q0 4 4 4l5 5M5 1q-2 2 0 4" stroke="#666" strokeWidth="2" /></Svg>
            <Svg w={14}><circle cx="7" cy="7" r="6.500" fill="#2f63cf" stroke="#9db9ea" /><text x="7" y="11" textAnchor="middle" fontSize="11" fontWeight="700" fontFamily="Open Sans" fill="#fff">?</text></Svg>
            <Minus /><Restore /><Cross s={8} />
          </DocKeys>
        </TabBar>
        <AvevaRibbon />
        <Body>
          <ExplorerPane />
          <VSplit />
          <RightSide><DrawingPane /><HSplit /><RulesPane /></RightSide>
        </Body>
        <AvevaStatus />
        <TaskbarView />
      </Aveva>
      <WordView />
      <CriteriaDialog />
      <Ime>
        <div><SogouS s={17} /></div>
        <div><Svg w={14} h={15}><path d="M1 4h12v6.500H1zM7 0v15" stroke={BL} strokeWidth="2" /></Svg></div>
        <div><Svg w={13} h={13}><path d="M8 0q3 10-8 9 3 5 8 3.500Q15 9 8 0z" fill={BL} /></Svg></div>
        <div><Svg w={10} h={13}><circle cx="2.500" cy="2.500" r="2" stroke={BL} /><path d="M7 8h2.500q0 4-3 5 1.500-2 .5-3z" fill={BL} /></Svg></div>
        <div><Svg w={17} h={12}><rect width="17" height="12" rx="1" fill={BL} /><path d="M2 3.500h13M2 6h13" stroke="#fff" strokeWidth="1.500" strokeDasharray="1.500 1" /><path d="M4 9h9" stroke="#fff" strokeWidth="1.500" /></Svg></div>
        <div><Svg w={10} h={14}><circle cx="5" cy="3" r="3" fill="#aaa" /><path d="M0 14V9q0-2 2-2h6q2 0 2 2v5z" fill="#aaa" /></Svg></div>
        <div><Svg w={14} h={12}><path d="M4 0q3 2 6 0l4 3-2 3-1-1v7H3V5L2 6 0 3z" fill={BL} /></Svg></div>
        <div><Svg w={14}><path d="M1 13l6-6" stroke={BL} strokeWidth="3" /><path d="M13.500 3.500A4 4 0 116.500 7 4 4 0 0110.500.5L9 3.500 11 5z" fill={BL} /></Svg></div>
      </Ime>
    </Desktop>
  );
}
